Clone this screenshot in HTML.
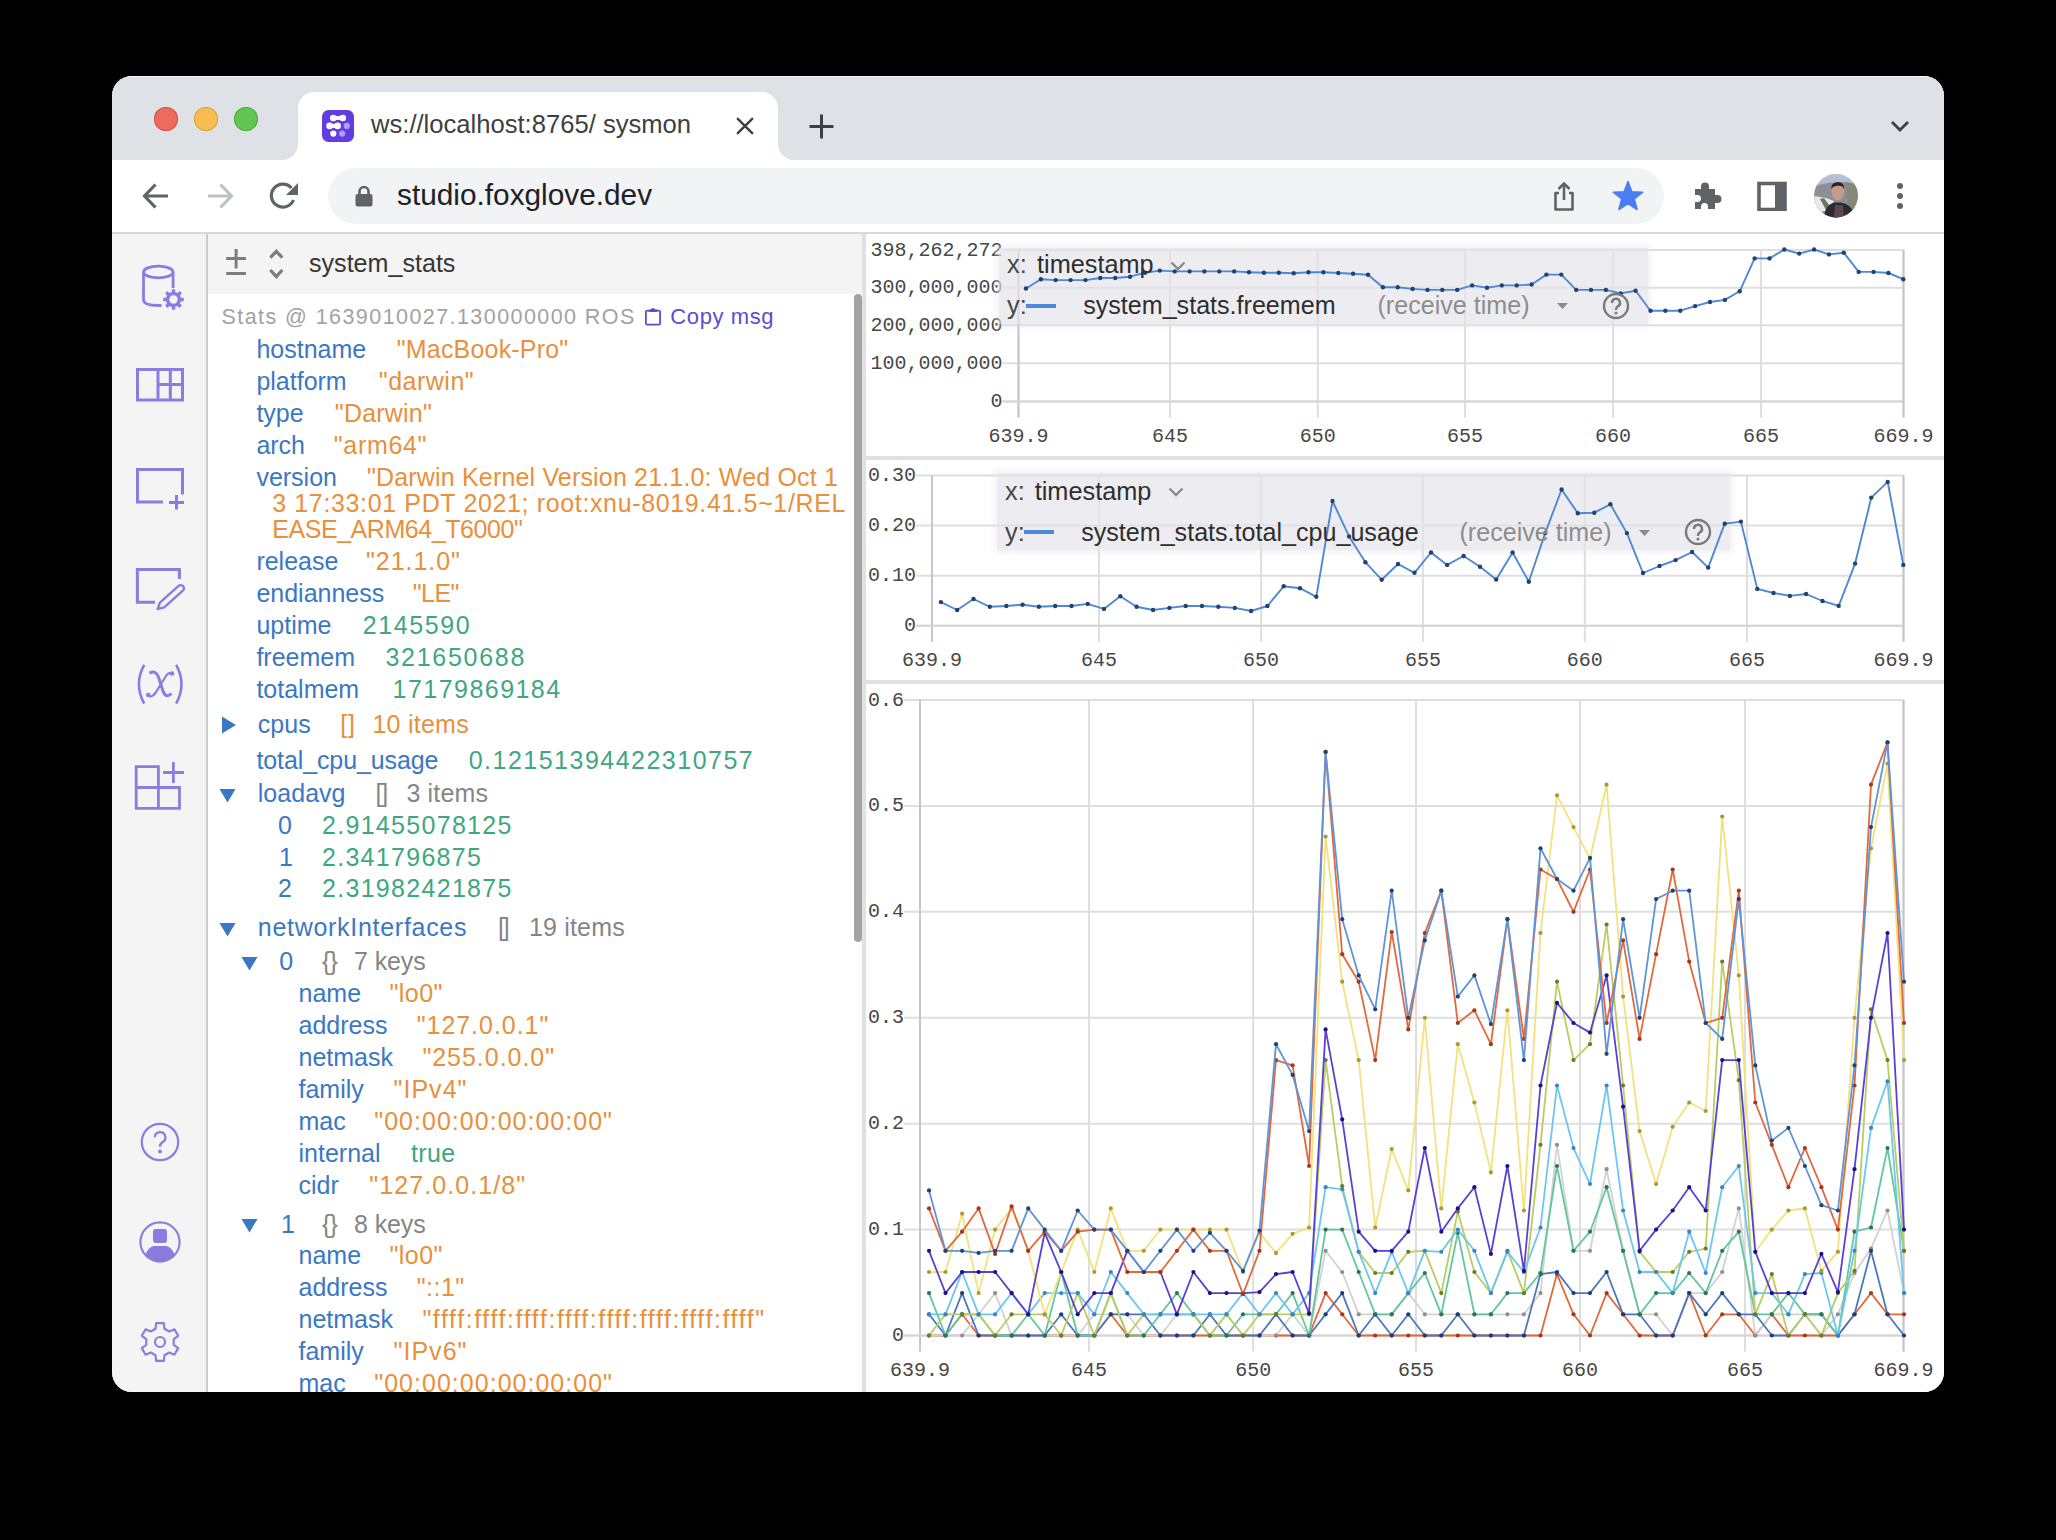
<!DOCTYPE html>
<html><head><meta charset="utf-8">
<style>
html,body{margin:0;padding:0;}
body{width:2056px;height:1540px;background:#000;position:relative;overflow:hidden;font-family:"Liberation Sans", sans-serif;}
.a{position:absolute;}
.t{position:absolute;white-space:pre;line-height:1;}
#win{position:absolute;left:112px;top:76px;width:1832px;height:1316px;border-radius:20px;overflow:hidden;background:#fff;}
</style></head><body>
<div id="win">

<div class="a" style="left:-112px;top:-76px;width:2056px;height:1540px;">
<div class="a" style="left:112px;top:76px;width:1832px;height:84px;background:#dee1e6;"></div>
<div class="a" style="left:112px;top:76px;width:1832px;height:1px;background:#f4f5f7;"></div>
<div class="a" style="left:154px;top:107px;width:24px;height:24px;border-radius:50%;background:#ee6a5f;box-shadow:inset 0 0 0 1px #ce5347;"></div>
<div class="a" style="left:194px;top:107px;width:24px;height:24px;border-radius:50%;background:#f5be4f;box-shadow:inset 0 0 0 1px #d6a243;"></div>
<div class="a" style="left:234px;top:107px;width:24px;height:24px;border-radius:50%;background:#62c554;box-shadow:inset 0 0 0 1px #58a942;"></div>
<div class="a" style="left:298px;top:92px;width:480px;height:68px;background:#fff;border-radius:16px 16px 0 0;"></div>
<div class="a" style="left:282px;top:144px;width:16px;height:16px;background:radial-gradient(circle at 0 0, #dee1e6 15.5px, #fff 16.5px);"></div>
<div class="a" style="left:778px;top:144px;width:16px;height:16px;background:radial-gradient(circle at 100% 0, #dee1e6 15.5px, #fff 16.5px);"></div>
<svg class="a" style="left:322px;top:110px" width="32" height="32" viewBox="0 0 32 32">
<rect x="0" y="0" width="32" height="32" rx="6.5" fill="#613de0"/>
<g fill="#fff">
<circle cx="11.3" cy="8" r="3.3"/><circle cx="20.8" cy="8" r="3.3"/><rect x="11.3" y="6" width="9.5" height="4"/>
<circle cx="7.6" cy="15.9" r="3.3"/><circle cx="15.6" cy="15.9" r="3.3"/><rect x="7.6" y="13.9" width="8" height="4"/>
<circle cx="11.3" cy="23.6" r="3.1"/>
</g>
<g fill="#b39cf7"><circle cx="24.8" cy="15.9" r="3.1"/><circle cx="20.2" cy="23.6" r="3.1"/></g>
</svg>
<div class="t" style="left:371px;top:112.3px;font-size:25.6px;color:#3c4043;">ws://localhost:8765/ sysmon</div>
<svg class="a" style="left:735px;top:116px" width="20" height="20" viewBox="0 0 20 20"><path d="M2.8 2.8L17.2 17.2M17.2 2.8L2.8 17.2" stroke="#3c4043" stroke-width="2.4" stroke-linecap="round"/></svg>
<svg class="a" style="left:808px;top:113px" width="27" height="27" viewBox="0 0 27 27"><path d="M13.5 1.5V25.5M1.5 13.5H25.5" stroke="#3c4043" stroke-width="3"/></svg>
<svg class="a" style="left:1889px;top:118px" width="22" height="16" viewBox="0 0 22 16"><path d="M3 4L11 12L19 4" fill="none" stroke="#3c4043" stroke-width="2.8"/></svg>
<div class="a" style="left:112px;top:160px;width:1832px;height:72px;background:#fff;"></div>
<div class="a" style="left:112px;top:232px;width:1832px;height:2px;background:#d8d8d8;"></div>
<svg class="a" style="left:140px;top:180px" width="32" height="32" viewBox="0 0 32 32"><path d="M28 16H5M15.5 4.5L4.5 16L15.5 27.5" fill="none" stroke="#5f6368" stroke-width="3.2"/></svg>
<svg class="a" style="left:204px;top:180px" width="32" height="32" viewBox="0 0 32 32"><path d="M4 16H27M16.5 4.5L27.5 16L16.5 27.5" fill="none" stroke="#bdc1c6" stroke-width="3.2"/></svg>
<svg class="a" style="left:268px;top:180px" width="32" height="32" viewBox="0 0 32 32"><path d="M25.5 20A11.5 11.5 0 1 1 23.5 8" fill="none" stroke="#5f6368" stroke-width="3.2"/><path d="M30 3V15H18Z" fill="#5f6368"/></svg>
<div class="a" style="left:328px;top:168px;width:1336px;height:56px;border-radius:28px;background:#f1f3f4;"></div>
<svg class="a" style="left:355px;top:185px" width="18" height="22" viewBox="0 0 18 22"><path d="M4.5 9V6.5A4.5 4.5 0 0 1 13.5 6.5V9" fill="none" stroke="#5f6368" stroke-width="2.6"/><rect x="0.5" y="9" width="17" height="12.5" rx="2" fill="#5f6368"/></svg>
<div class="t" style="left:397px;top:180.4px;font-size:29.8px;color:#202124;">studio.foxglove.dev</div>
<svg class="a" style="left:1550px;top:180px" width="28" height="32" viewBox="0 0 28 32"><path d="M9 13H5.5V29.5H22.5V13H19" fill="none" stroke="#5f6368" stroke-width="2.6" stroke-linejoin="round"/><path d="M14 20V3.5M8.5 9L14 3.5L19.5 9" fill="none" stroke="#5f6368" stroke-width="2.6" stroke-linejoin="round"/></svg>
<svg class="a" style="left:1610px;top:178px" width="36" height="36" viewBox="0 0 36 36"><polygon points="18.00,3.50 21.88,13.66 32.74,14.21 24.28,21.04 27.11,31.54 18.00,25.60 8.89,31.54 11.72,21.04 3.26,14.21 14.12,13.66" fill="#4a7ef2" stroke="#4a7ef2" stroke-width="1.5" stroke-linejoin="round"/></svg>
<svg class="a" style="left:1692px;top:179px" width="32" height="32" viewBox="0 0 32 32"><path d="M3 10H9V7.5A4 4 0 0 1 17 7.5V10H23V16H25.5A4 4 0 0 1 25.5 24H23V30H16V27.5A3.5 3.5 0 0 0 9 27.5V30H3V23H5.5A3.5 3.5 0 0 0 5.5 16H3Z" fill="#5f6368"/></svg>
<svg class="a" style="left:1756px;top:181px" width="32" height="30" viewBox="0 0 32 30"><rect x="3" y="2.5" width="26" height="26" fill="none" stroke="#5f6368" stroke-width="3.6"/><rect x="19" y="2" width="10" height="27" fill="#5f6368"/></svg>
<svg class="a" style="left:1814px;top:174px" width="44" height="44" viewBox="0 0 44 44">
<defs><clipPath id="av"><circle cx="22" cy="21.6" r="21.8"/></clipPath>
<linearGradient id="sky" x1="0" y1="0" x2="0" y2="1"><stop offset="0" stop-color="#b9c3d8"/><stop offset="1" stop-color="#9aa0ad"/></linearGradient></defs>
<g clip-path="url(#av)">
<rect width="44" height="44" fill="url(#sky)"/>
<path d="M0 12L14 9L30 8L44 10V44H0Z" fill="#8d8f96"/>
<path d="M31 8Q40 9 44 16V44H33Q35 26 31 8Z" fill="#848876"/>
<path d="M0 22L12 24L20 27L14 36L0 40Z" fill="#e6eaec"/>
<path d="M6 25L10 24L16 32L12 36Z" fill="#6f7660"/>
<ellipse cx="23.7" cy="18" rx="6.3" ry="8.2" fill="#c69c88"/>
<path d="M17.2 15Q17 8.5 23.5 8Q30.5 8 30.3 15Q28.5 11.5 24 11.8Q19.5 11.8 17.2 15Z" fill="#2e2429"/>
<path d="M10 44Q11 30 21 28.5H27Q37 30 40 40V44Z" fill="#2a2c33"/>
<path d="M20 44L21 31H29L30 44Z" fill="#5b4752"/>
</g></svg>
<div class="a" style="left:1897px;top:183px;width:6px;height:6px;border-radius:50%;background:#5f6368;"></div>
<div class="a" style="left:1897px;top:193px;width:6px;height:6px;border-radius:50%;background:#5f6368;"></div>
<div class="a" style="left:1897px;top:203px;width:6px;height:6px;border-radius:50%;background:#5f6368;"></div>
<div class="a" style="left:112px;top:234px;width:94px;height:1158px;background:#f4f4f5;"></div>
<div class="a" style="left:206px;top:234px;width:2px;height:1158px;background:#cbcbcb;"></div>
<svg class="a" style="left:130px;top:258px" width="60" height="56" viewBox="0 0 60 56">
<ellipse cx="28.3" cy="14" rx="14.8" ry="5.8" fill="none" stroke="#8a7ddf" stroke-width="2.8"/>
<path d="M13.5 14V41.5Q13.5 47.5 28.3 47.5H31.5" fill="none" stroke="#8a7ddf" stroke-width="2.8"/>
<path d="M43.1 14V30" fill="none" stroke="#8a7ddf" stroke-width="2.8"/>
<path d="M50.52,38.59L50.92,39.87L53.76,39.82L53.76,43.18L50.92,43.13L50.52,44.41L49.90,45.60L51.94,47.57L49.57,49.94L47.60,47.90L46.41,48.52L45.13,48.92L45.18,51.76L41.82,51.76L41.87,48.92L40.59,48.52L39.40,47.90L37.43,49.94L35.06,47.57L37.10,45.60L36.48,44.41L36.08,43.13L33.24,43.18L33.24,39.82L36.08,39.87L36.48,38.59L37.10,37.40L35.06,35.43L37.43,33.06L39.40,35.10L40.59,34.48L41.87,34.08L41.82,31.24L45.18,31.24L45.13,34.08L46.41,34.48L47.60,35.10L49.57,33.06L51.94,35.43L49.90,37.40Z" fill="#8a7ddf"/>
<circle cx="43.5" cy="41.5" r="4.2" fill="#f4f4f5"/>
</svg>
<svg class="a" style="left:130px;top:362px" width="60" height="44" viewBox="0 0 60 44">
<rect x="7.5" y="7.5" width="45" height="30.5" fill="none" stroke="#8a7ddf" stroke-width="3"/>
<path d="M28 7.5V38M40.3 7.5V38M28 22.5H52.5" stroke="#8a7ddf" stroke-width="3"/>
</svg>
<svg class="a" style="left:130px;top:462px" width="60" height="52" viewBox="0 0 60 52">
<path d="M33 40H7.5V7.5H52.5V32.5" fill="none" stroke="#8a7ddf" stroke-width="3"/>
<path d="M39 40.5H54M46.5 33V47.5" stroke="#8a7ddf" stroke-width="3"/>
</svg>
<svg class="a" style="left:130px;top:562px" width="60" height="52" viewBox="0 0 60 52">
<path d="M25 40.3H7.4V7.5H49.4V16.9" fill="none" stroke="#8a7ddf" stroke-width="3"/>
<path d="M27.6 47L29.93 40.61L48.56 23.92A3.2 3.2 0 0 1 52.84 28.68L34.21 45.37Z" fill="none" stroke="#8a7ddf" stroke-width="2.4" stroke-linejoin="round"/>
</svg>
<svg class="a" style="left:130px;top:660px" width="60" height="50" viewBox="130 660 60 50">
<path d="M144.2 664.8Q133.6 684 144.2 703.6" fill="none" stroke="#8a7ddf" stroke-width="2.6"/>
<path d="M176.2 664.8Q186.8 684 176.2 703.6" fill="none" stroke="#8a7ddf" stroke-width="2.6"/>
<path d="M149.5 673.2Q155.5 669.5 158.5 677L162.8 690.5Q165.5 699 171.5 693.5" fill="none" stroke="#8a7ddf" stroke-width="3"/>
<path d="M148.5 695.5Q151.5 698 155 693.5L166 676Q168.5 672 171.8 673.5" fill="none" stroke="#8a7ddf" stroke-width="2.2"/>
<circle cx="148.3" cy="695" r="2.3" fill="#8a7ddf"/><circle cx="172" cy="673.5" r="2.3" fill="#8a7ddf"/>
</svg>
<svg class="a" style="left:130px;top:755px" width="60" height="60" viewBox="0 0 60 60">
<path d="M6.2 32.5H49.5V53.4H6.2V11.7H28.4V53.4" fill="none" stroke="#8a7ddf" stroke-width="2.8"/>
<path d="M33.1 17.5H54M43.4 7V27.9" stroke="#8a7ddf" stroke-width="2.8"/>
</svg>
<svg class="a" style="left:138px;top:1120px" width="44" height="44" viewBox="0 0 44 44">
<circle cx="22" cy="22" r="18.2" fill="none" stroke="#8a7ddf" stroke-width="2.2"/>
<path d="M16.8 17.2A5.3 5.3 0 1 1 24.3 22.2Q22 23.8 22 26.8" fill="none" stroke="#8a7ddf" stroke-width="2.3"/>
<circle cx="22" cy="31.5" r="1.9" fill="#8a7ddf"/>
</svg>
<svg class="a" style="left:138px;top:1220px" width="44" height="44" viewBox="0 0 44 44">
<defs><clipPath id="uc"><circle cx="22" cy="22" r="19.5"/></clipPath></defs>
<circle cx="22" cy="22" r="19.6" fill="none" stroke="#8a7ddf" stroke-width="2.1"/>
<rect x="15" y="9" width="14" height="14" rx="3" fill="#8a7ddf"/>
<g clip-path="url(#uc)"><path d="M6 42Q8 27 16 26H28Q36 27 38 42Z" fill="#8a7ddf"/></g>
</svg>
<svg class="a" style="left:138px;top:1320px" width="44" height="44" viewBox="0 0 44 44">
<path d="M17.53,8.73L18.20,3.18L25.80,3.18L26.47,8.73L31.26,11.50L36.40,9.30L40.20,15.88L35.72,19.23L35.72,24.77L40.20,28.12L36.40,34.70L31.26,32.50L26.47,35.27L25.80,40.82L18.20,40.82L17.53,35.27L12.74,32.50L7.60,34.70L3.80,28.12L8.28,24.77L8.28,19.23L3.80,15.88L7.60,9.30L12.74,11.50Z" fill="none" stroke="#8a7ddf" stroke-width="2.2" stroke-linejoin="round"/>
<circle cx="22" cy="22" r="5" fill="none" stroke="#8a7ddf" stroke-width="2.2"/>
</svg>
<div class="a" style="left:208px;top:234px;width:654px;height:1158px;background:#fff;overflow:hidden;">
<div class="a" style="left:0;top:0;width:654px;height:60px;background:#f4f4f4;"></div>
<svg class="a" style="left:14px;top:12px" width="28" height="34" viewBox="0 0 28 34"><path d="M14.1 3.1V22.6M4.2 12.5H23.9M4.2 27.4H23.9" stroke="#7d7d7d" stroke-width="3"/></svg>
<svg class="a" style="left:56px;top:14px" width="24" height="34" viewBox="0 0 24 34"><path d="M6.3 9.6L12.3 3.4L18.3 9.6M6.3 22L12.3 28.6L18.3 22" fill="none" stroke="#7d7d7d" stroke-width="3.2"/></svg>
<div class="t" style="left:101px;top:17px;font-size:25.1px;color:#363636;">system_stats</div>
<div class="a" style="left:646px;top:60px;width:8px;height:648px;border-radius:4px;background:#a3a3a3;"></div>
<div class="t" style="left:13.5px;top:72.7px;font-size:21.5px;color:#a2a2a2;font-size:21.5px;letter-spacing:1.43px;">Stats @ 1639010027.130000000 ROS</div>
<svg class="a" style="left:436px;top:73px" width="18" height="20" viewBox="0 0 18 20"><rect x="1.9" y="3.6" width="14.2" height="14" rx="1.2" fill="none" stroke="#5a4ed3" stroke-width="1.8"/><path d="M5.5 4.5H12.5V3.2H10.5A1.5 1.5 0 0 0 7.5 3.2H5.5Z" fill="#5a4ed3" stroke="#5a4ed3" stroke-width="1.2"/></svg>
<div class="t" style="left:462.3px;top:71.7px;font-size:22.0px;color:#5a4ed3;font-size:22px;letter-spacing:0.61px;">Copy msg</div>
<div class="t" style="left:48.4px;top:103.3px;font-size:25px;color:#3b78c4;">hostname</div>
<div class="t" style="left:188.8px;top:103.3px;font-size:25px;color:#e8903c;letter-spacing:0.18px;">"MacBook-Pro"</div>
<div class="t" style="left:48.4px;top:135.3px;font-size:25px;color:#3b78c4;">platform</div>
<div class="t" style="left:170.8px;top:135.3px;font-size:25px;color:#e8903c;letter-spacing:0.50px;">"darwin"</div>
<div class="t" style="left:48.4px;top:167.3px;font-size:25px;color:#3b78c4;">type</div>
<div class="t" style="left:126.8px;top:167.3px;font-size:25px;color:#e8903c;letter-spacing:0.21px;">"Darwin"</div>
<div class="t" style="left:48.4px;top:199.3px;font-size:25px;color:#3b78c4;">arch</div>
<div class="t" style="left:125.8px;top:199.3px;font-size:25px;color:#e8903c;letter-spacing:0.67px;">"arm64"</div>
<div class="t" style="left:48.4px;top:231.3px;font-size:25px;color:#3b78c4;">version</div>
<div class="t" style="left:159.0px;top:231.3px;font-size:25px;color:#e8903c;letter-spacing:0.17px;">"Darwin Kernel Version 21.1.0: Wed Oct 1</div>
<div class="t" style="left:64.2px;top:257.3px;font-size:25px;color:#e8903c;letter-spacing:0.64px;">3 17:33:01 PDT 2021; root:xnu-8019.41.5~1/REL</div>
<div class="t" style="left:64.2px;top:283.3px;font-size:25px;color:#e8903c;letter-spacing:-0.44px;">EASE_ARM64_T6000"</div>
<div class="t" style="left:48.4px;top:315.4px;font-size:25px;color:#3b78c4;">release</div>
<div class="t" style="left:158.0px;top:315.4px;font-size:25px;color:#e8903c;letter-spacing:0.96px;">"21.1.0"</div>
<div class="t" style="left:48.4px;top:347.4px;font-size:25px;color:#3b78c4;">endianness</div>
<div class="t" style="left:204.8px;top:347.4px;font-size:25px;color:#e8903c;letter-spacing:-0.55px;">"LE"</div>
<div class="t" style="left:48.4px;top:379.4px;font-size:25px;color:#3b78c4;">uptime</div>
<div class="t" style="left:154.7px;top:379.4px;font-size:25px;color:#3fa77f;letter-spacing:1.61px;">2145590</div>
<div class="t" style="left:48.4px;top:411.4px;font-size:25px;color:#3b78c4;">freemem</div>
<div class="t" style="left:177.5px;top:411.4px;font-size:25px;color:#3fa77f;letter-spacing:1.71px;">321650688</div>
<div class="t" style="left:48.4px;top:443.4px;font-size:25px;color:#3b78c4;">totalmem</div>
<div class="t" style="left:184.6px;top:443.4px;font-size:25px;color:#3fa77f;letter-spacing:1.46px;">17179869184</div>
<svg class="a" style="left:13px;top:481px" width="16" height="20" viewBox="0 0 16 20"><path d="M1 1.5L15 10L1 18.5Z" fill="#3b78c4"/></svg>
<div class="t" style="left:49.8px;top:477.7px;font-size:25px;color:#3b78c4;letter-spacing:0.05px;">cpus</div>
<div class="t" style="left:132.3px;top:477.7px;font-size:25px;color:#e8903c;letter-spacing:0.70px;">[]</div>
<div class="t" style="left:164.4px;top:477.7px;font-size:25px;color:#e8903c;letter-spacing:0.26px;">10 items</div>
<div class="t" style="left:48.4px;top:513.7px;font-size:25px;color:#3b78c4;letter-spacing:-0.10px;">total_cpu_usage</div>
<div class="t" style="left:260.7px;top:513.7px;font-size:25px;color:#3fa77f;letter-spacing:1.49px;">0.12151394422310757</div>
<svg class="a" style="left:10.5px;top:554.4px" width="17" height="15" viewBox="0 0 17 15"><path d="M0.5 1H16.5L8.5 14.5Z" fill="#3b78c4"/></svg>
<div class="t" style="left:49.8px;top:547.3px;font-size:25px;color:#3b78c4;letter-spacing:0.02px;">loadavg</div>
<div class="t" style="left:167.6px;top:547.3px;font-size:25px;color:#858585;letter-spacing:-1.20px;">[]</div>
<div class="t" style="left:198.4px;top:547.3px;font-size:25px;color:#858585;letter-spacing:0.17px;">3 items</div>
<div class="t" style="left:70.0px;top:578.5px;font-size:25px;color:#3b78c4;">0</div>
<div class="t" style="left:114.0px;top:578.5px;font-size:25px;color:#3fa77f;letter-spacing:1.30px;">2.91455078125</div>
<div class="t" style="left:71.0px;top:610.6px;font-size:25px;color:#3b78c4;">1</div>
<div class="t" style="left:114.0px;top:610.6px;font-size:25px;color:#3fa77f;letter-spacing:1.29px;">2.341796875</div>
<div class="t" style="left:70.0px;top:642.0px;font-size:25px;color:#3b78c4;">2</div>
<div class="t" style="left:114.0px;top:642.0px;font-size:25px;color:#3fa77f;letter-spacing:1.30px;">2.31982421875</div>
<svg class="a" style="left:10.5px;top:688.4px" width="17" height="15" viewBox="0 0 17 15"><path d="M0.5 1H16.5L8.5 14.5Z" fill="#3b78c4"/></svg>
<div class="t" style="left:49.8px;top:681.2px;font-size:25px;color:#3b78c4;letter-spacing:0.71px;">networkInterfaces</div>
<div class="t" style="left:289.9px;top:681.2px;font-size:25px;color:#858585;letter-spacing:-2.10px;">[]</div>
<div class="t" style="left:321.0px;top:681.2px;font-size:25px;color:#858585;letter-spacing:0.17px;">19 items</div>
<svg class="a" style="left:32.5px;top:722.4px" width="17" height="15" viewBox="0 0 17 15"><path d="M0.5 1H16.5L8.5 14.5Z" fill="#3b78c4"/></svg>
<div class="t" style="left:71.3px;top:715.2px;font-size:25px;color:#3b78c4;">0</div>
<div class="t" style="left:114.0px;top:715.2px;font-size:25px;color:#858585;letter-spacing:-0.75px;">{}</div>
<div class="t" style="left:146.0px;top:715.2px;font-size:25px;color:#858585;letter-spacing:-0.11px;">7 keys</div>
<div class="t" style="left:90.5px;top:747.3px;font-size:25px;color:#3b78c4;">name</div>
<div class="t" style="left:181.4px;top:747.3px;font-size:25px;color:#e8903c;letter-spacing:0.48px;">"lo0"</div>
<div class="t" style="left:90.5px;top:779.3px;font-size:25px;color:#3b78c4;">address</div>
<div class="t" style="left:208.7px;top:779.3px;font-size:25px;color:#e8903c;letter-spacing:0.96px;">"127.0.0.1"</div>
<div class="t" style="left:90.5px;top:811.3px;font-size:25px;color:#3b78c4;">netmask</div>
<div class="t" style="left:214.4px;top:811.3px;font-size:25px;color:#e8903c;letter-spacing:0.97px;">"255.0.0.0"</div>
<div class="t" style="left:90.5px;top:843.3px;font-size:25px;color:#3b78c4;">family</div>
<div class="t" style="left:185.6px;top:843.3px;font-size:25px;color:#e8903c;letter-spacing:1.01px;">"IPv4"</div>
<div class="t" style="left:90.5px;top:875.3px;font-size:25px;color:#3b78c4;">mac</div>
<div class="t" style="left:166.3px;top:875.3px;font-size:25px;color:#e8903c;letter-spacing:1.02px;">"00:00:00:00:00:00"</div>
<div class="t" style="left:90.5px;top:907.3px;font-size:25px;color:#3b78c4;">internal</div>
<div class="t" style="left:202.9px;top:907.3px;font-size:25px;color:#3fa77f;letter-spacing:0.43px;">true</div>
<div class="t" style="left:90.5px;top:939.3px;font-size:25px;color:#3b78c4;">cidr</div>
<div class="t" style="left:161.2px;top:939.3px;font-size:25px;color:#e8903c;letter-spacing:1.10px;">"127.0.0.1/8"</div>
<svg class="a" style="left:32.5px;top:984.4px" width="17" height="15" viewBox="0 0 17 15"><path d="M0.5 1H16.5L8.5 14.5Z" fill="#3b78c4"/></svg>
<div class="t" style="left:73.0px;top:977.8px;font-size:25px;color:#3b78c4;">1</div>
<div class="t" style="left:114.0px;top:977.8px;font-size:25px;color:#858585;letter-spacing:-0.75px;">{}</div>
<div class="t" style="left:146.0px;top:977.8px;font-size:25px;color:#858585;letter-spacing:-0.11px;">8 keys</div>
<div class="t" style="left:90.5px;top:1009.3px;font-size:25px;color:#3b78c4;">name</div>
<div class="t" style="left:181.4px;top:1009.3px;font-size:25px;color:#e8903c;letter-spacing:0.48px;">"lo0"</div>
<div class="t" style="left:90.5px;top:1041.3px;font-size:25px;color:#3b78c4;">address</div>
<div class="t" style="left:208.7px;top:1041.3px;font-size:25px;color:#e8903c;letter-spacing:0.50px;">"::1"</div>
<div class="t" style="left:90.5px;top:1073.3px;font-size:25px;color:#3b78c4;">netmask</div>
<div class="t" style="left:214.4px;top:1073.3px;font-size:25px;color:#e8903c;letter-spacing:1.60px;">"ffff:ffff:ffff:ffff:ffff:ffff:ffff:ffff"</div>
<div class="t" style="left:90.5px;top:1105.3px;font-size:25px;color:#3b78c4;">family</div>
<div class="t" style="left:185.6px;top:1105.3px;font-size:25px;color:#e8903c;letter-spacing:1.01px;">"IPv6"</div>
<div class="t" style="left:90.5px;top:1137.3px;font-size:25px;color:#3b78c4;">mac</div>
<div class="t" style="left:166.3px;top:1137.3px;font-size:25px;color:#e8903c;letter-spacing:1.02px;">"00:00:00:00:00:00"</div>
</div>
<div class="a" style="left:862px;top:234px;width:4px;height:1158px;background:#e1e1e1;"></div>
<div class="a" style="left:866px;top:234px;width:1078px;height:1158px;background:#fff;"></div>
<div class="a" style="left:866px;top:456px;width:1078px;height:4px;background:#e1e1e1;"></div>
<div class="a" style="left:866px;top:680px;width:1078px;height:4px;background:#e1e1e1;"></div>
<svg class="a" style="left:866px;top:234px" width="1078" height="222" viewBox="866 234 1078 222"><line x1="1002.5" y1="250" x2="1903.5" y2="250" stroke="#dedede" stroke-width="2"/><line x1="1002.5" y1="287.7" x2="1903.5" y2="287.7" stroke="#dedede" stroke-width="2"/><line x1="1002.5" y1="325.2" x2="1903.5" y2="325.2" stroke="#dedede" stroke-width="2"/><line x1="1002.5" y1="363.3" x2="1903.5" y2="363.3" stroke="#dedede" stroke-width="2"/><line x1="1002.5" y1="401.5" x2="1903.5" y2="401.5" stroke="#dedede" stroke-width="2"/><line x1="1018.5" y1="250" x2="1018.5" y2="417.5" stroke="#dedede" stroke-width="2"/><line x1="1170" y1="250" x2="1170" y2="417.5" stroke="#dedede" stroke-width="2"/><line x1="1317.8" y1="250" x2="1317.8" y2="417.5" stroke="#dedede" stroke-width="2"/><line x1="1465" y1="250" x2="1465" y2="417.5" stroke="#dedede" stroke-width="2"/><line x1="1613.1" y1="250" x2="1613.1" y2="417.5" stroke="#dedede" stroke-width="2"/><line x1="1761" y1="250" x2="1761" y2="417.5" stroke="#dedede" stroke-width="2"/><line x1="1903.5" y1="250" x2="1903.5" y2="417.5" stroke="#dedede" stroke-width="2"/><line x1="1018.5" y1="250" x2="1018.5" y2="417.5" stroke="#c6c6c6" stroke-width="2"/><line x1="1002.5" y1="401.5" x2="1904.5" y2="401.5" stroke="#d6d6d6" stroke-width="2"/><line x1="1903.5" y1="250" x2="1903.5" y2="417.5" stroke="#c6c6c6" stroke-width="2"/><text x="1002.5" y="255.5" text-anchor="end" font-family="Liberation Mono, monospace" font-size="20" fill="#474747">398,262,272</text><text x="1002.5" y="293.2" text-anchor="end" font-family="Liberation Mono, monospace" font-size="20" fill="#474747">300,000,000</text><text x="1002.5" y="330.7" text-anchor="end" font-family="Liberation Mono, monospace" font-size="20" fill="#474747">200,000,000</text><text x="1002.5" y="368.8" text-anchor="end" font-family="Liberation Mono, monospace" font-size="20" fill="#474747">100,000,000</text><text x="1002.5" y="407.0" text-anchor="end" font-family="Liberation Mono, monospace" font-size="20" fill="#474747">0</text><text x="1018.5" y="442" text-anchor="middle" font-family="Liberation Mono, monospace" font-size="20" fill="#474747">639.9</text><text x="1170" y="442" text-anchor="middle" font-family="Liberation Mono, monospace" font-size="20" fill="#474747">645</text><text x="1317.8" y="442" text-anchor="middle" font-family="Liberation Mono, monospace" font-size="20" fill="#474747">650</text><text x="1465" y="442" text-anchor="middle" font-family="Liberation Mono, monospace" font-size="20" fill="#474747">655</text><text x="1613.1" y="442" text-anchor="middle" font-family="Liberation Mono, monospace" font-size="20" fill="#474747">660</text><text x="1761" y="442" text-anchor="middle" font-family="Liberation Mono, monospace" font-size="20" fill="#474747">665</text><text x="1903.5" y="442" text-anchor="middle" font-family="Liberation Mono, monospace" font-size="20" fill="#474747">669.9</text></svg>
<svg class="a" style="left:866px;top:460px" width="1078" height="220" viewBox="866 460 1078 220"><line x1="916" y1="475.5" x2="1903.5" y2="475.5" stroke="#dedede" stroke-width="2"/><line x1="916" y1="525.4" x2="1903.5" y2="525.4" stroke="#dedede" stroke-width="2"/><line x1="916" y1="575.8" x2="1903.5" y2="575.8" stroke="#dedede" stroke-width="2"/><line x1="916" y1="625.7" x2="1903.5" y2="625.7" stroke="#dedede" stroke-width="2"/><line x1="932" y1="475.5" x2="932" y2="641.7" stroke="#dedede" stroke-width="2"/><line x1="1099" y1="475.5" x2="1099" y2="641.7" stroke="#dedede" stroke-width="2"/><line x1="1261.1" y1="475.5" x2="1261.1" y2="641.7" stroke="#dedede" stroke-width="2"/><line x1="1422.9" y1="475.5" x2="1422.9" y2="641.7" stroke="#dedede" stroke-width="2"/><line x1="1584.8" y1="475.5" x2="1584.8" y2="641.7" stroke="#dedede" stroke-width="2"/><line x1="1747" y1="475.5" x2="1747" y2="641.7" stroke="#dedede" stroke-width="2"/><line x1="1903.5" y1="475.5" x2="1903.5" y2="641.7" stroke="#dedede" stroke-width="2"/><line x1="932" y1="475.5" x2="932" y2="641.7" stroke="#c6c6c6" stroke-width="2"/><line x1="916" y1="625.7" x2="1904.5" y2="625.7" stroke="#d6d6d6" stroke-width="2"/><line x1="1903.5" y1="475.5" x2="1903.5" y2="641.7" stroke="#c6c6c6" stroke-width="2"/><text x="916" y="481.0" text-anchor="end" font-family="Liberation Mono, monospace" font-size="20" fill="#474747">0.30</text><text x="916" y="530.9" text-anchor="end" font-family="Liberation Mono, monospace" font-size="20" fill="#474747">0.20</text><text x="916" y="581.3" text-anchor="end" font-family="Liberation Mono, monospace" font-size="20" fill="#474747">0.10</text><text x="916" y="631.2" text-anchor="end" font-family="Liberation Mono, monospace" font-size="20" fill="#474747">0</text><text x="932" y="666" text-anchor="middle" font-family="Liberation Mono, monospace" font-size="20" fill="#474747">639.9</text><text x="1099" y="666" text-anchor="middle" font-family="Liberation Mono, monospace" font-size="20" fill="#474747">645</text><text x="1261.1" y="666" text-anchor="middle" font-family="Liberation Mono, monospace" font-size="20" fill="#474747">650</text><text x="1422.9" y="666" text-anchor="middle" font-family="Liberation Mono, monospace" font-size="20" fill="#474747">655</text><text x="1584.8" y="666" text-anchor="middle" font-family="Liberation Mono, monospace" font-size="20" fill="#474747">660</text><text x="1747" y="666" text-anchor="middle" font-family="Liberation Mono, monospace" font-size="20" fill="#474747">665</text><text x="1903.5" y="666" text-anchor="middle" font-family="Liberation Mono, monospace" font-size="20" fill="#474747">669.9</text></svg>
<svg class="a" style="left:866px;top:684px" width="1078" height="708" viewBox="866 684 1078 708"><line x1="904" y1="700.0" x2="1903.5" y2="700.0" stroke="#dedede" stroke-width="2"/><line x1="904" y1="805.9" x2="1903.5" y2="805.9" stroke="#dedede" stroke-width="2"/><line x1="904" y1="911.8" x2="1903.5" y2="911.8" stroke="#dedede" stroke-width="2"/><line x1="904" y1="1017.8" x2="1903.5" y2="1017.8" stroke="#dedede" stroke-width="2"/><line x1="904" y1="1123.7" x2="1903.5" y2="1123.7" stroke="#dedede" stroke-width="2"/><line x1="904" y1="1229.6" x2="1903.5" y2="1229.6" stroke="#dedede" stroke-width="2"/><line x1="904" y1="1335.5" x2="1903.5" y2="1335.5" stroke="#dedede" stroke-width="2"/><line x1="920" y1="700" x2="920" y2="1351.5" stroke="#dedede" stroke-width="2"/><line x1="1089" y1="700" x2="1089" y2="1351.5" stroke="#dedede" stroke-width="2"/><line x1="1253.2" y1="700" x2="1253.2" y2="1351.5" stroke="#dedede" stroke-width="2"/><line x1="1416" y1="700" x2="1416" y2="1351.5" stroke="#dedede" stroke-width="2"/><line x1="1580" y1="700" x2="1580" y2="1351.5" stroke="#dedede" stroke-width="2"/><line x1="1745" y1="700" x2="1745" y2="1351.5" stroke="#dedede" stroke-width="2"/><line x1="1903.5" y1="700" x2="1903.5" y2="1351.5" stroke="#dedede" stroke-width="2"/><line x1="920" y1="700" x2="920" y2="1351.5" stroke="#c6c6c6" stroke-width="2"/><line x1="904" y1="1335.5" x2="1904.5" y2="1335.5" stroke="#d6d6d6" stroke-width="2"/><line x1="1903.5" y1="700" x2="1903.5" y2="1351.5" stroke="#c6c6c6" stroke-width="2"/><text x="904" y="705.5" text-anchor="end" font-family="Liberation Mono, monospace" font-size="20" fill="#474747">0.6</text><text x="904" y="811.4" text-anchor="end" font-family="Liberation Mono, monospace" font-size="20" fill="#474747">0.5</text><text x="904" y="917.3" text-anchor="end" font-family="Liberation Mono, monospace" font-size="20" fill="#474747">0.4</text><text x="904" y="1023.3" text-anchor="end" font-family="Liberation Mono, monospace" font-size="20" fill="#474747">0.3</text><text x="904" y="1129.2" text-anchor="end" font-family="Liberation Mono, monospace" font-size="20" fill="#474747">0.2</text><text x="904" y="1235.1" text-anchor="end" font-family="Liberation Mono, monospace" font-size="20" fill="#474747">0.1</text><text x="904" y="1341.0" text-anchor="end" font-family="Liberation Mono, monospace" font-size="20" fill="#474747">0</text><text x="920" y="1375.5" text-anchor="middle" font-family="Liberation Mono, monospace" font-size="20" fill="#474747">639.9</text><text x="1089" y="1375.5" text-anchor="middle" font-family="Liberation Mono, monospace" font-size="20" fill="#474747">645</text><text x="1253.2" y="1375.5" text-anchor="middle" font-family="Liberation Mono, monospace" font-size="20" fill="#474747">650</text><text x="1416" y="1375.5" text-anchor="middle" font-family="Liberation Mono, monospace" font-size="20" fill="#474747">655</text><text x="1580" y="1375.5" text-anchor="middle" font-family="Liberation Mono, monospace" font-size="20" fill="#474747">660</text><text x="1745" y="1375.5" text-anchor="middle" font-family="Liberation Mono, monospace" font-size="20" fill="#474747">665</text><text x="1903.5" y="1375.5" text-anchor="middle" font-family="Liberation Mono, monospace" font-size="20" fill="#474747">669.9</text></svg>
<div class="a" style="left:999px;top:248px;width:649px;height:76px;background:rgba(228,228,234,0.66);box-shadow:0 0 6px 3px rgba(228,228,234,0.45);"></div>
<svg class="a" style="left:866px;top:234px" width="1078" height="222" viewBox="866 234 1078 222"><clipPath id="c234"><rect x="1018.5" y="244" width="889.0" height="163.5"/></clipPath><g clip-path="url(#c234)"><polyline points="1026.0,288.5 1040.9,279.3 1055.7,280.1 1070.6,280.1 1085.5,280.1 1100.3,278.0 1115.2,278.0 1130.1,276.7 1145.0,272.7 1159.8,270.6 1174.7,271.4 1189.6,271.4 1204.4,271.4 1219.3,271.4 1234.2,271.4 1249.0,272.2 1263.9,272.7 1278.8,272.7 1293.7,273.2 1308.5,272.2 1323.4,272.2 1338.3,273.0 1353.1,273.8 1368.0,274.8 1382.9,287.2 1397.7,287.2 1412.6,288.9 1427.5,289.9 1442.3,289.9 1457.2,289.9 1472.1,285.4 1487.0,287.8 1501.8,285.4 1516.7,285.4 1531.6,284.5 1546.4,274.6 1561.3,274.6 1576.2,289.9 1591.0,289.9 1605.9,289.9 1620.8,293.4 1635.6,290.7 1650.5,310.7 1665.4,310.7 1680.3,310.7 1695.1,306.1 1710.0,302.0 1724.9,299.9 1739.7,291.3 1754.6,258.4 1769.5,258.4 1784.3,249.5 1799.2,253.6 1814.1,249.5 1829.0,254.4 1843.8,252.7 1858.7,271.9 1873.6,271.9 1888.4,273.0 1903.3,279.2" fill="none" stroke="#4e88d6" stroke-width="1.9" stroke-linejoin="round"/><circle cx="1026.0" cy="288.5" r="2.2" fill="#23436e"/><circle cx="1040.9" cy="279.3" r="2.2" fill="#23436e"/><circle cx="1055.7" cy="280.1" r="2.2" fill="#23436e"/><circle cx="1070.6" cy="280.1" r="2.2" fill="#23436e"/><circle cx="1085.5" cy="280.1" r="2.2" fill="#23436e"/><circle cx="1100.3" cy="278.0" r="2.2" fill="#23436e"/><circle cx="1115.2" cy="278.0" r="2.2" fill="#23436e"/><circle cx="1130.1" cy="276.7" r="2.2" fill="#23436e"/><circle cx="1145.0" cy="272.7" r="2.2" fill="#23436e"/><circle cx="1159.8" cy="270.6" r="2.2" fill="#23436e"/><circle cx="1174.7" cy="271.4" r="2.2" fill="#23436e"/><circle cx="1189.6" cy="271.4" r="2.2" fill="#23436e"/><circle cx="1204.4" cy="271.4" r="2.2" fill="#23436e"/><circle cx="1219.3" cy="271.4" r="2.2" fill="#23436e"/><circle cx="1234.2" cy="271.4" r="2.2" fill="#23436e"/><circle cx="1249.0" cy="272.2" r="2.2" fill="#23436e"/><circle cx="1263.9" cy="272.7" r="2.2" fill="#23436e"/><circle cx="1278.8" cy="272.7" r="2.2" fill="#23436e"/><circle cx="1293.7" cy="273.2" r="2.2" fill="#23436e"/><circle cx="1308.5" cy="272.2" r="2.2" fill="#23436e"/><circle cx="1323.4" cy="272.2" r="2.2" fill="#23436e"/><circle cx="1338.3" cy="273.0" r="2.2" fill="#23436e"/><circle cx="1353.1" cy="273.8" r="2.2" fill="#23436e"/><circle cx="1368.0" cy="274.8" r="2.2" fill="#23436e"/><circle cx="1382.9" cy="287.2" r="2.2" fill="#23436e"/><circle cx="1397.7" cy="287.2" r="2.2" fill="#23436e"/><circle cx="1412.6" cy="288.9" r="2.2" fill="#23436e"/><circle cx="1427.5" cy="289.9" r="2.2" fill="#23436e"/><circle cx="1442.3" cy="289.9" r="2.2" fill="#23436e"/><circle cx="1457.2" cy="289.9" r="2.2" fill="#23436e"/><circle cx="1472.1" cy="285.4" r="2.2" fill="#23436e"/><circle cx="1487.0" cy="287.8" r="2.2" fill="#23436e"/><circle cx="1501.8" cy="285.4" r="2.2" fill="#23436e"/><circle cx="1516.7" cy="285.4" r="2.2" fill="#23436e"/><circle cx="1531.6" cy="284.5" r="2.2" fill="#23436e"/><circle cx="1546.4" cy="274.6" r="2.2" fill="#23436e"/><circle cx="1561.3" cy="274.6" r="2.2" fill="#23436e"/><circle cx="1576.2" cy="289.9" r="2.2" fill="#23436e"/><circle cx="1591.0" cy="289.9" r="2.2" fill="#23436e"/><circle cx="1605.9" cy="289.9" r="2.2" fill="#23436e"/><circle cx="1620.8" cy="293.4" r="2.2" fill="#23436e"/><circle cx="1635.6" cy="290.7" r="2.2" fill="#23436e"/><circle cx="1650.5" cy="310.7" r="2.2" fill="#23436e"/><circle cx="1665.4" cy="310.7" r="2.2" fill="#23436e"/><circle cx="1680.3" cy="310.7" r="2.2" fill="#23436e"/><circle cx="1695.1" cy="306.1" r="2.2" fill="#23436e"/><circle cx="1710.0" cy="302.0" r="2.2" fill="#23436e"/><circle cx="1724.9" cy="299.9" r="2.2" fill="#23436e"/><circle cx="1739.7" cy="291.3" r="2.2" fill="#23436e"/><circle cx="1754.6" cy="258.4" r="2.2" fill="#23436e"/><circle cx="1769.5" cy="258.4" r="2.2" fill="#23436e"/><circle cx="1784.3" cy="249.5" r="2.2" fill="#23436e"/><circle cx="1799.2" cy="253.6" r="2.2" fill="#23436e"/><circle cx="1814.1" cy="249.5" r="2.2" fill="#23436e"/><circle cx="1829.0" cy="254.4" r="2.2" fill="#23436e"/><circle cx="1843.8" cy="252.7" r="2.2" fill="#23436e"/><circle cx="1858.7" cy="271.9" r="2.2" fill="#23436e"/><circle cx="1873.6" cy="271.9" r="2.2" fill="#23436e"/><circle cx="1888.4" cy="273.0" r="2.2" fill="#23436e"/><circle cx="1903.3" cy="279.2" r="2.2" fill="#23436e"/></g></svg>
<div class="t" style="left:1007px;top:251.9px;font-size:25.3px;color:#474747;">x:</div>
<div class="t" style="left:1037px;top:251.9px;font-size:25.3px;color:#2e2e2e;">timestamp</div>
<svg class="a" style="left:1170px;top:261px" width="16" height="10" viewBox="0 0 16 10"><path d="M1.5 1.5L8 8L14.5 1.5" fill="none" stroke="#8a8a8a" stroke-width="2.4"/></svg>
<div class="t" style="left:1007px;top:292.5px;font-size:25.3px;color:#474747;">y:</div>
<div class="a" style="left:1026px;top:304px;width:30px;height:4px;background:#4e88d6;"></div>
<div class="t" style="left:1083.2px;top:292.5px;font-size:25.1px;color:#2e2e2e;">system_stats.freemem</div>
<div class="t" style="left:1377.5px;top:292.5px;font-size:25.1px;color:#8d8d8d;">(receive time)</div>
<svg class="a" style="left:1557px;top:303px" width="11" height="6" viewBox="0 0 11 6"><path d="M0 0H11L5.5 6Z" fill="#8a8a8a"/></svg>
<svg class="a" style="left:1601.7px;top:292px" width="28" height="28" viewBox="0 0 28 28"><circle cx="14" cy="14" r="12" fill="none" stroke="#7a7a7a" stroke-width="2.4"/><path d="M10 11A4 4 0 1 1 15.5 14.5Q14 15.5 14 18" fill="none" stroke="#7a7a7a" stroke-width="2.4"/><circle cx="14" cy="21" r="1.5" fill="#7a7a7a"/></svg>
<div class="a" style="left:997px;top:473px;width:733px;height:77px;background:rgba(228,228,234,0.66);box-shadow:0 0 6px 3px rgba(228,228,234,0.45);"></div>
<svg class="a" style="left:866px;top:460px" width="1078" height="220" viewBox="866 460 1078 220"><clipPath id="c460"><rect x="932" y="469.5" width="975.5" height="162.20000000000005"/></clipPath><g clip-path="url(#c460)"><polyline points="940.9,602.1 957.2,610.0 973.5,599.0 989.8,606.8 1006.3,606.0 1022.6,604.7 1038.9,606.8 1055.2,606.0 1071.5,606.0 1087.7,603.9 1104.0,608.9 1120.3,596.3 1136.6,606.8 1153.1,610.0 1169.4,607.9 1185.7,606.0 1202.0,606.0 1218.3,606.8 1234.8,607.9 1251.1,611.0 1267.4,606.0 1283.7,586.3 1300.0,588.2 1316.3,596.8 1332.5,501.0 1349.1,536.4 1365.4,562.2 1381.7,579.8 1398.0,564.0 1414.5,572.8 1431.0,552.5 1447.1,564.9 1463.6,556.0 1480.0,566.8 1496.2,579.5 1512.6,552.5 1528.8,581.7 1545.2,533.1 1561.6,489.5 1577.8,513.2 1594.3,512.7 1610.4,504.3 1626.9,533.1 1643.0,573.0 1659.5,566.0 1675.6,560.1 1692.1,552.0 1708.2,567.6 1724.7,523.7 1740.9,521.6 1757.3,588.9 1773.5,593.0 1789.9,595.9 1806.1,594.0 1822.5,601.0 1838.7,605.9 1855.1,563.6 1871.3,497.6 1887.7,481.9 1903.3,564.9" fill="none" stroke="#4e88d6" stroke-width="1.9" stroke-linejoin="round"/><circle cx="940.9" cy="602.1" r="2.2" fill="#23436e"/><circle cx="957.2" cy="610.0" r="2.2" fill="#23436e"/><circle cx="973.5" cy="599.0" r="2.2" fill="#23436e"/><circle cx="989.8" cy="606.8" r="2.2" fill="#23436e"/><circle cx="1006.3" cy="606.0" r="2.2" fill="#23436e"/><circle cx="1022.6" cy="604.7" r="2.2" fill="#23436e"/><circle cx="1038.9" cy="606.8" r="2.2" fill="#23436e"/><circle cx="1055.2" cy="606.0" r="2.2" fill="#23436e"/><circle cx="1071.5" cy="606.0" r="2.2" fill="#23436e"/><circle cx="1087.7" cy="603.9" r="2.2" fill="#23436e"/><circle cx="1104.0" cy="608.9" r="2.2" fill="#23436e"/><circle cx="1120.3" cy="596.3" r="2.2" fill="#23436e"/><circle cx="1136.6" cy="606.8" r="2.2" fill="#23436e"/><circle cx="1153.1" cy="610.0" r="2.2" fill="#23436e"/><circle cx="1169.4" cy="607.9" r="2.2" fill="#23436e"/><circle cx="1185.7" cy="606.0" r="2.2" fill="#23436e"/><circle cx="1202.0" cy="606.0" r="2.2" fill="#23436e"/><circle cx="1218.3" cy="606.8" r="2.2" fill="#23436e"/><circle cx="1234.8" cy="607.9" r="2.2" fill="#23436e"/><circle cx="1251.1" cy="611.0" r="2.2" fill="#23436e"/><circle cx="1267.4" cy="606.0" r="2.2" fill="#23436e"/><circle cx="1283.7" cy="586.3" r="2.2" fill="#23436e"/><circle cx="1300.0" cy="588.2" r="2.2" fill="#23436e"/><circle cx="1316.3" cy="596.8" r="2.2" fill="#23436e"/><circle cx="1332.5" cy="501.0" r="2.2" fill="#23436e"/><circle cx="1349.1" cy="536.4" r="2.2" fill="#23436e"/><circle cx="1365.4" cy="562.2" r="2.2" fill="#23436e"/><circle cx="1381.7" cy="579.8" r="2.2" fill="#23436e"/><circle cx="1398.0" cy="564.0" r="2.2" fill="#23436e"/><circle cx="1414.5" cy="572.8" r="2.2" fill="#23436e"/><circle cx="1431.0" cy="552.5" r="2.2" fill="#23436e"/><circle cx="1447.1" cy="564.9" r="2.2" fill="#23436e"/><circle cx="1463.6" cy="556.0" r="2.2" fill="#23436e"/><circle cx="1480.0" cy="566.8" r="2.2" fill="#23436e"/><circle cx="1496.2" cy="579.5" r="2.2" fill="#23436e"/><circle cx="1512.6" cy="552.5" r="2.2" fill="#23436e"/><circle cx="1528.8" cy="581.7" r="2.2" fill="#23436e"/><circle cx="1545.2" cy="533.1" r="2.2" fill="#23436e"/><circle cx="1561.6" cy="489.5" r="2.2" fill="#23436e"/><circle cx="1577.8" cy="513.2" r="2.2" fill="#23436e"/><circle cx="1594.3" cy="512.7" r="2.2" fill="#23436e"/><circle cx="1610.4" cy="504.3" r="2.2" fill="#23436e"/><circle cx="1626.9" cy="533.1" r="2.2" fill="#23436e"/><circle cx="1643.0" cy="573.0" r="2.2" fill="#23436e"/><circle cx="1659.5" cy="566.0" r="2.2" fill="#23436e"/><circle cx="1675.6" cy="560.1" r="2.2" fill="#23436e"/><circle cx="1692.1" cy="552.0" r="2.2" fill="#23436e"/><circle cx="1708.2" cy="567.6" r="2.2" fill="#23436e"/><circle cx="1724.7" cy="523.7" r="2.2" fill="#23436e"/><circle cx="1740.9" cy="521.6" r="2.2" fill="#23436e"/><circle cx="1757.3" cy="588.9" r="2.2" fill="#23436e"/><circle cx="1773.5" cy="593.0" r="2.2" fill="#23436e"/><circle cx="1789.9" cy="595.9" r="2.2" fill="#23436e"/><circle cx="1806.1" cy="594.0" r="2.2" fill="#23436e"/><circle cx="1822.5" cy="601.0" r="2.2" fill="#23436e"/><circle cx="1838.7" cy="605.9" r="2.2" fill="#23436e"/><circle cx="1855.1" cy="563.6" r="2.2" fill="#23436e"/><circle cx="1871.3" cy="497.6" r="2.2" fill="#23436e"/><circle cx="1887.7" cy="481.9" r="2.2" fill="#23436e"/><circle cx="1903.3" cy="564.9" r="2.2" fill="#23436e"/></g></svg>
<div class="t" style="left:1005px;top:478.8px;font-size:25.3px;color:#474747;">x:</div>
<div class="t" style="left:1034.7px;top:478.8px;font-size:25.3px;color:#2e2e2e;">timestamp</div>
<svg class="a" style="left:1168px;top:487px" width="16" height="10" viewBox="0 0 16 10"><path d="M1.5 1.5L8 8L14.5 1.5" fill="none" stroke="#8a8a8a" stroke-width="2.4"/></svg>
<div class="t" style="left:1005px;top:520.4000000000001px;font-size:25.3px;color:#474747;">y:</div>
<div class="a" style="left:1024px;top:530px;width:30.40000000000009px;height:4px;background:#4e88d6;"></div>
<div class="t" style="left:1081.2px;top:520.4000000000001px;font-size:25.1px;color:#2e2e2e;">system_stats.total_cpu_usage</div>
<div class="t" style="left:1459.5px;top:520.4000000000001px;font-size:25.1px;color:#8d8d8d;">(receive time)</div>
<svg class="a" style="left:1639px;top:530px" width="11" height="6" viewBox="0 0 11 6"><path d="M0 0H11L5.5 6Z" fill="#8a8a8a"/></svg>
<svg class="a" style="left:1684px;top:518px" width="28" height="28" viewBox="0 0 28 28"><circle cx="14" cy="14" r="12" fill="none" stroke="#7a7a7a" stroke-width="2.4"/><path d="M10 11A4 4 0 1 1 15.5 14.5Q14 15.5 14 18" fill="none" stroke="#7a7a7a" stroke-width="2.4"/><circle cx="14" cy="21" r="1.5" fill="#7a7a7a"/></svg>
<svg class="a" style="left:866px;top:684px" width="1078" height="708" viewBox="866 684 1078 708"><clipPath id="c684"><rect x="920" y="694" width="987.5" height="647.5"/></clipPath><g clip-path="url(#c684)"><polyline points="929.0,1335.5 945.5,1335.5 962.1,1314.3 978.6,1335.5 995.1,1335.5 1011.6,1335.5 1028.2,1335.5 1044.7,1335.5 1061.2,1335.5 1077.7,1335.5 1094.3,1335.5 1110.8,1314.3 1127.3,1335.5 1143.8,1335.5 1160.4,1335.5 1176.9,1335.5 1193.4,1335.5 1209.9,1335.5 1226.5,1335.5 1243.0,1335.5 1259.5,1335.5 1276.0,1335.5 1292.6,1335.5 1309.1,1335.5 1325.6,1293.1 1342.2,1314.3 1358.7,1335.5 1375.2,1335.5 1391.7,1335.5 1408.3,1335.5 1424.8,1335.5 1441.3,1335.5 1457.8,1335.5 1474.4,1335.5 1490.9,1335.5 1507.4,1335.5 1523.9,1335.5 1540.5,1335.5 1557.0,1274.1 1573.5,1314.3 1590.0,1335.5 1606.6,1293.1 1623.1,1314.3 1639.6,1335.5 1656.1,1335.5 1672.7,1335.5 1689.2,1293.1 1705.7,1335.5 1722.2,1314.3 1738.8,1314.3 1755.3,1335.5 1771.8,1314.3 1788.4,1335.5 1804.9,1335.5 1821.4,1335.5 1837.9,1335.5 1854.5,1314.3 1871.0,1293.1 1887.5,1314.3 1904.0,1314.3" fill="none" stroke="#e3693d" stroke-width="1.8" stroke-linejoin="round"/><circle cx="929.0" cy="1335.5" r="2.1" fill="#9e3b1c"/><circle cx="945.5" cy="1335.5" r="2.1" fill="#9e3b1c"/><circle cx="962.1" cy="1314.3" r="2.1" fill="#9e3b1c"/><circle cx="978.6" cy="1335.5" r="2.1" fill="#9e3b1c"/><circle cx="995.1" cy="1335.5" r="2.1" fill="#9e3b1c"/><circle cx="1011.6" cy="1335.5" r="2.1" fill="#9e3b1c"/><circle cx="1028.2" cy="1335.5" r="2.1" fill="#9e3b1c"/><circle cx="1044.7" cy="1335.5" r="2.1" fill="#9e3b1c"/><circle cx="1061.2" cy="1335.5" r="2.1" fill="#9e3b1c"/><circle cx="1077.7" cy="1335.5" r="2.1" fill="#9e3b1c"/><circle cx="1094.3" cy="1335.5" r="2.1" fill="#9e3b1c"/><circle cx="1110.8" cy="1314.3" r="2.1" fill="#9e3b1c"/><circle cx="1127.3" cy="1335.5" r="2.1" fill="#9e3b1c"/><circle cx="1143.8" cy="1335.5" r="2.1" fill="#9e3b1c"/><circle cx="1160.4" cy="1335.5" r="2.1" fill="#9e3b1c"/><circle cx="1176.9" cy="1335.5" r="2.1" fill="#9e3b1c"/><circle cx="1193.4" cy="1335.5" r="2.1" fill="#9e3b1c"/><circle cx="1209.9" cy="1335.5" r="2.1" fill="#9e3b1c"/><circle cx="1226.5" cy="1335.5" r="2.1" fill="#9e3b1c"/><circle cx="1243.0" cy="1335.5" r="2.1" fill="#9e3b1c"/><circle cx="1259.5" cy="1335.5" r="2.1" fill="#9e3b1c"/><circle cx="1276.0" cy="1335.5" r="2.1" fill="#9e3b1c"/><circle cx="1292.6" cy="1335.5" r="2.1" fill="#9e3b1c"/><circle cx="1309.1" cy="1335.5" r="2.1" fill="#9e3b1c"/><circle cx="1325.6" cy="1293.1" r="2.1" fill="#9e3b1c"/><circle cx="1342.2" cy="1314.3" r="2.1" fill="#9e3b1c"/><circle cx="1358.7" cy="1335.5" r="2.1" fill="#9e3b1c"/><circle cx="1375.2" cy="1335.5" r="2.1" fill="#9e3b1c"/><circle cx="1391.7" cy="1335.5" r="2.1" fill="#9e3b1c"/><circle cx="1408.3" cy="1335.5" r="2.1" fill="#9e3b1c"/><circle cx="1424.8" cy="1335.5" r="2.1" fill="#9e3b1c"/><circle cx="1441.3" cy="1335.5" r="2.1" fill="#9e3b1c"/><circle cx="1457.8" cy="1335.5" r="2.1" fill="#9e3b1c"/><circle cx="1474.4" cy="1335.5" r="2.1" fill="#9e3b1c"/><circle cx="1490.9" cy="1335.5" r="2.1" fill="#9e3b1c"/><circle cx="1507.4" cy="1335.5" r="2.1" fill="#9e3b1c"/><circle cx="1523.9" cy="1335.5" r="2.1" fill="#9e3b1c"/><circle cx="1540.5" cy="1335.5" r="2.1" fill="#9e3b1c"/><circle cx="1557.0" cy="1274.1" r="2.1" fill="#9e3b1c"/><circle cx="1573.5" cy="1314.3" r="2.1" fill="#9e3b1c"/><circle cx="1590.0" cy="1335.5" r="2.1" fill="#9e3b1c"/><circle cx="1606.6" cy="1293.1" r="2.1" fill="#9e3b1c"/><circle cx="1623.1" cy="1314.3" r="2.1" fill="#9e3b1c"/><circle cx="1639.6" cy="1335.5" r="2.1" fill="#9e3b1c"/><circle cx="1656.1" cy="1335.5" r="2.1" fill="#9e3b1c"/><circle cx="1672.7" cy="1335.5" r="2.1" fill="#9e3b1c"/><circle cx="1689.2" cy="1293.1" r="2.1" fill="#9e3b1c"/><circle cx="1705.7" cy="1335.5" r="2.1" fill="#9e3b1c"/><circle cx="1722.2" cy="1314.3" r="2.1" fill="#9e3b1c"/><circle cx="1738.8" cy="1314.3" r="2.1" fill="#9e3b1c"/><circle cx="1755.3" cy="1335.5" r="2.1" fill="#9e3b1c"/><circle cx="1771.8" cy="1314.3" r="2.1" fill="#9e3b1c"/><circle cx="1788.4" cy="1335.5" r="2.1" fill="#9e3b1c"/><circle cx="1804.9" cy="1335.5" r="2.1" fill="#9e3b1c"/><circle cx="1821.4" cy="1335.5" r="2.1" fill="#9e3b1c"/><circle cx="1837.9" cy="1335.5" r="2.1" fill="#9e3b1c"/><circle cx="1854.5" cy="1314.3" r="2.1" fill="#9e3b1c"/><circle cx="1871.0" cy="1293.1" r="2.1" fill="#9e3b1c"/><circle cx="1887.5" cy="1314.3" r="2.1" fill="#9e3b1c"/><circle cx="1904.0" cy="1314.3" r="2.1" fill="#9e3b1c"/><polyline points="929.0,1335.5 945.5,1335.5 962.1,1335.5 978.6,1314.3 995.1,1293.1 1011.6,1335.5 1028.2,1335.5 1044.7,1335.5 1061.2,1335.5 1077.7,1335.5 1094.3,1314.3 1110.8,1314.3 1127.3,1314.3 1143.8,1335.5 1160.4,1335.5 1176.9,1314.3 1193.4,1314.3 1209.9,1335.5 1226.5,1314.3 1243.0,1335.5 1259.5,1335.5 1276.0,1335.5 1292.6,1314.3 1309.1,1335.5 1325.6,1250.8 1342.2,1272.0 1358.7,1314.3 1375.2,1314.3 1391.7,1314.3 1408.3,1293.1 1424.8,1314.3 1441.3,1314.3 1457.8,1314.3 1474.4,1314.3 1490.9,1314.3 1507.4,1314.3 1523.9,1314.3 1540.5,1293.1 1557.0,1144.8 1573.5,1250.8 1590.0,1250.8 1606.6,1169.2 1623.1,1250.8 1639.6,1314.3 1656.1,1314.3 1672.7,1335.5 1689.2,1293.1 1705.7,1293.1 1722.2,1272.0 1738.8,1208.4 1755.3,1335.5 1771.8,1314.3 1788.4,1314.3 1804.9,1314.3 1821.4,1335.5 1837.9,1314.3 1854.5,1273.0 1871.0,1248.6 1887.5,1210.5 1904.0,1293.1" fill="none" stroke="#d2d2d2" stroke-width="1.8" stroke-linejoin="round"/><circle cx="929.0" cy="1335.5" r="2.1" fill="#8f8f8f"/><circle cx="945.5" cy="1335.5" r="2.1" fill="#8f8f8f"/><circle cx="962.1" cy="1335.5" r="2.1" fill="#8f8f8f"/><circle cx="978.6" cy="1314.3" r="2.1" fill="#8f8f8f"/><circle cx="995.1" cy="1293.1" r="2.1" fill="#8f8f8f"/><circle cx="1011.6" cy="1335.5" r="2.1" fill="#8f8f8f"/><circle cx="1028.2" cy="1335.5" r="2.1" fill="#8f8f8f"/><circle cx="1044.7" cy="1335.5" r="2.1" fill="#8f8f8f"/><circle cx="1061.2" cy="1335.5" r="2.1" fill="#8f8f8f"/><circle cx="1077.7" cy="1335.5" r="2.1" fill="#8f8f8f"/><circle cx="1094.3" cy="1314.3" r="2.1" fill="#8f8f8f"/><circle cx="1110.8" cy="1314.3" r="2.1" fill="#8f8f8f"/><circle cx="1127.3" cy="1314.3" r="2.1" fill="#8f8f8f"/><circle cx="1143.8" cy="1335.5" r="2.1" fill="#8f8f8f"/><circle cx="1160.4" cy="1335.5" r="2.1" fill="#8f8f8f"/><circle cx="1176.9" cy="1314.3" r="2.1" fill="#8f8f8f"/><circle cx="1193.4" cy="1314.3" r="2.1" fill="#8f8f8f"/><circle cx="1209.9" cy="1335.5" r="2.1" fill="#8f8f8f"/><circle cx="1226.5" cy="1314.3" r="2.1" fill="#8f8f8f"/><circle cx="1243.0" cy="1335.5" r="2.1" fill="#8f8f8f"/><circle cx="1259.5" cy="1335.5" r="2.1" fill="#8f8f8f"/><circle cx="1276.0" cy="1335.5" r="2.1" fill="#8f8f8f"/><circle cx="1292.6" cy="1314.3" r="2.1" fill="#8f8f8f"/><circle cx="1309.1" cy="1335.5" r="2.1" fill="#8f8f8f"/><circle cx="1325.6" cy="1250.8" r="2.1" fill="#8f8f8f"/><circle cx="1342.2" cy="1272.0" r="2.1" fill="#8f8f8f"/><circle cx="1358.7" cy="1314.3" r="2.1" fill="#8f8f8f"/><circle cx="1375.2" cy="1314.3" r="2.1" fill="#8f8f8f"/><circle cx="1391.7" cy="1314.3" r="2.1" fill="#8f8f8f"/><circle cx="1408.3" cy="1293.1" r="2.1" fill="#8f8f8f"/><circle cx="1424.8" cy="1314.3" r="2.1" fill="#8f8f8f"/><circle cx="1441.3" cy="1314.3" r="2.1" fill="#8f8f8f"/><circle cx="1457.8" cy="1314.3" r="2.1" fill="#8f8f8f"/><circle cx="1474.4" cy="1314.3" r="2.1" fill="#8f8f8f"/><circle cx="1490.9" cy="1314.3" r="2.1" fill="#8f8f8f"/><circle cx="1507.4" cy="1314.3" r="2.1" fill="#8f8f8f"/><circle cx="1523.9" cy="1314.3" r="2.1" fill="#8f8f8f"/><circle cx="1540.5" cy="1293.1" r="2.1" fill="#8f8f8f"/><circle cx="1557.0" cy="1144.8" r="2.1" fill="#8f8f8f"/><circle cx="1573.5" cy="1250.8" r="2.1" fill="#8f8f8f"/><circle cx="1590.0" cy="1250.8" r="2.1" fill="#8f8f8f"/><circle cx="1606.6" cy="1169.2" r="2.1" fill="#8f8f8f"/><circle cx="1623.1" cy="1250.8" r="2.1" fill="#8f8f8f"/><circle cx="1639.6" cy="1314.3" r="2.1" fill="#8f8f8f"/><circle cx="1656.1" cy="1314.3" r="2.1" fill="#8f8f8f"/><circle cx="1672.7" cy="1335.5" r="2.1" fill="#8f8f8f"/><circle cx="1689.2" cy="1293.1" r="2.1" fill="#8f8f8f"/><circle cx="1705.7" cy="1293.1" r="2.1" fill="#8f8f8f"/><circle cx="1722.2" cy="1272.0" r="2.1" fill="#8f8f8f"/><circle cx="1738.8" cy="1208.4" r="2.1" fill="#8f8f8f"/><circle cx="1755.3" cy="1335.5" r="2.1" fill="#8f8f8f"/><circle cx="1771.8" cy="1314.3" r="2.1" fill="#8f8f8f"/><circle cx="1788.4" cy="1314.3" r="2.1" fill="#8f8f8f"/><circle cx="1804.9" cy="1314.3" r="2.1" fill="#8f8f8f"/><circle cx="1821.4" cy="1335.5" r="2.1" fill="#8f8f8f"/><circle cx="1837.9" cy="1314.3" r="2.1" fill="#8f8f8f"/><circle cx="1854.5" cy="1273.0" r="2.1" fill="#8f8f8f"/><circle cx="1871.0" cy="1248.6" r="2.1" fill="#8f8f8f"/><circle cx="1887.5" cy="1210.5" r="2.1" fill="#8f8f8f"/><circle cx="1904.0" cy="1293.1" r="2.1" fill="#8f8f8f"/><polyline points="929.0,1314.3 945.5,1335.5 962.1,1293.1 978.6,1335.5 995.1,1335.5 1011.6,1335.5 1028.2,1335.5 1044.7,1335.5 1061.2,1314.3 1077.7,1335.5 1094.3,1335.5 1110.8,1314.3 1127.3,1314.3 1143.8,1314.3 1160.4,1335.5 1176.9,1335.5 1193.4,1335.5 1209.9,1314.3 1226.5,1335.5 1243.0,1335.5 1259.5,1335.5 1276.0,1314.3 1292.6,1335.5 1309.1,1335.5 1325.6,1314.3 1342.2,1293.1 1358.7,1335.5 1375.2,1314.3 1391.7,1335.5 1408.3,1314.3 1424.8,1335.5 1441.3,1335.5 1457.8,1314.3 1474.4,1335.5 1490.9,1335.5 1507.4,1335.5 1523.9,1335.5 1540.5,1274.1 1557.0,1272.0 1573.5,1293.1 1590.0,1293.1 1606.6,1272.0 1623.1,1314.3 1639.6,1314.3 1656.1,1335.5 1672.7,1335.5 1689.2,1293.1 1705.7,1314.3 1722.2,1293.1 1738.8,1314.3 1755.3,1314.3 1771.8,1335.5 1788.4,1335.5 1804.9,1314.3 1821.4,1314.3 1837.9,1335.5 1854.5,1314.3 1871.0,1250.8 1887.5,1314.3 1904.0,1335.5" fill="none" stroke="#4a78c0" stroke-width="1.8" stroke-linejoin="round"/><circle cx="929.0" cy="1314.3" r="2.1" fill="#1f3d70"/><circle cx="945.5" cy="1335.5" r="2.1" fill="#1f3d70"/><circle cx="962.1" cy="1293.1" r="2.1" fill="#1f3d70"/><circle cx="978.6" cy="1335.5" r="2.1" fill="#1f3d70"/><circle cx="995.1" cy="1335.5" r="2.1" fill="#1f3d70"/><circle cx="1011.6" cy="1335.5" r="2.1" fill="#1f3d70"/><circle cx="1028.2" cy="1335.5" r="2.1" fill="#1f3d70"/><circle cx="1044.7" cy="1335.5" r="2.1" fill="#1f3d70"/><circle cx="1061.2" cy="1314.3" r="2.1" fill="#1f3d70"/><circle cx="1077.7" cy="1335.5" r="2.1" fill="#1f3d70"/><circle cx="1094.3" cy="1335.5" r="2.1" fill="#1f3d70"/><circle cx="1110.8" cy="1314.3" r="2.1" fill="#1f3d70"/><circle cx="1127.3" cy="1314.3" r="2.1" fill="#1f3d70"/><circle cx="1143.8" cy="1314.3" r="2.1" fill="#1f3d70"/><circle cx="1160.4" cy="1335.5" r="2.1" fill="#1f3d70"/><circle cx="1176.9" cy="1335.5" r="2.1" fill="#1f3d70"/><circle cx="1193.4" cy="1335.5" r="2.1" fill="#1f3d70"/><circle cx="1209.9" cy="1314.3" r="2.1" fill="#1f3d70"/><circle cx="1226.5" cy="1335.5" r="2.1" fill="#1f3d70"/><circle cx="1243.0" cy="1335.5" r="2.1" fill="#1f3d70"/><circle cx="1259.5" cy="1335.5" r="2.1" fill="#1f3d70"/><circle cx="1276.0" cy="1314.3" r="2.1" fill="#1f3d70"/><circle cx="1292.6" cy="1335.5" r="2.1" fill="#1f3d70"/><circle cx="1309.1" cy="1335.5" r="2.1" fill="#1f3d70"/><circle cx="1325.6" cy="1314.3" r="2.1" fill="#1f3d70"/><circle cx="1342.2" cy="1293.1" r="2.1" fill="#1f3d70"/><circle cx="1358.7" cy="1335.5" r="2.1" fill="#1f3d70"/><circle cx="1375.2" cy="1314.3" r="2.1" fill="#1f3d70"/><circle cx="1391.7" cy="1335.5" r="2.1" fill="#1f3d70"/><circle cx="1408.3" cy="1314.3" r="2.1" fill="#1f3d70"/><circle cx="1424.8" cy="1335.5" r="2.1" fill="#1f3d70"/><circle cx="1441.3" cy="1335.5" r="2.1" fill="#1f3d70"/><circle cx="1457.8" cy="1314.3" r="2.1" fill="#1f3d70"/><circle cx="1474.4" cy="1335.5" r="2.1" fill="#1f3d70"/><circle cx="1490.9" cy="1335.5" r="2.1" fill="#1f3d70"/><circle cx="1507.4" cy="1335.5" r="2.1" fill="#1f3d70"/><circle cx="1523.9" cy="1335.5" r="2.1" fill="#1f3d70"/><circle cx="1540.5" cy="1274.1" r="2.1" fill="#1f3d70"/><circle cx="1557.0" cy="1272.0" r="2.1" fill="#1f3d70"/><circle cx="1573.5" cy="1293.1" r="2.1" fill="#1f3d70"/><circle cx="1590.0" cy="1293.1" r="2.1" fill="#1f3d70"/><circle cx="1606.6" cy="1272.0" r="2.1" fill="#1f3d70"/><circle cx="1623.1" cy="1314.3" r="2.1" fill="#1f3d70"/><circle cx="1639.6" cy="1314.3" r="2.1" fill="#1f3d70"/><circle cx="1656.1" cy="1335.5" r="2.1" fill="#1f3d70"/><circle cx="1672.7" cy="1335.5" r="2.1" fill="#1f3d70"/><circle cx="1689.2" cy="1293.1" r="2.1" fill="#1f3d70"/><circle cx="1705.7" cy="1314.3" r="2.1" fill="#1f3d70"/><circle cx="1722.2" cy="1293.1" r="2.1" fill="#1f3d70"/><circle cx="1738.8" cy="1314.3" r="2.1" fill="#1f3d70"/><circle cx="1755.3" cy="1314.3" r="2.1" fill="#1f3d70"/><circle cx="1771.8" cy="1335.5" r="2.1" fill="#1f3d70"/><circle cx="1788.4" cy="1335.5" r="2.1" fill="#1f3d70"/><circle cx="1804.9" cy="1314.3" r="2.1" fill="#1f3d70"/><circle cx="1821.4" cy="1314.3" r="2.1" fill="#1f3d70"/><circle cx="1837.9" cy="1335.5" r="2.1" fill="#1f3d70"/><circle cx="1854.5" cy="1314.3" r="2.1" fill="#1f3d70"/><circle cx="1871.0" cy="1250.8" r="2.1" fill="#1f3d70"/><circle cx="1887.5" cy="1314.3" r="2.1" fill="#1f3d70"/><circle cx="1904.0" cy="1335.5" r="2.1" fill="#1f3d70"/><polyline points="929.0,1293.1 945.5,1335.5 962.1,1314.3 978.6,1314.3 995.1,1335.5 1011.6,1335.5 1028.2,1314.3 1044.7,1335.5 1061.2,1272.0 1077.7,1335.5 1094.3,1335.5 1110.8,1293.1 1127.3,1335.5 1143.8,1335.5 1160.4,1314.3 1176.9,1293.1 1193.4,1314.3 1209.9,1335.5 1226.5,1335.5 1243.0,1314.3 1259.5,1314.3 1276.0,1314.3 1292.6,1293.1 1309.1,1335.5 1325.6,1229.6 1342.2,1229.6 1358.7,1272.0 1375.2,1314.3 1391.7,1314.3 1408.3,1293.1 1424.8,1273.0 1441.3,1314.3 1457.8,1232.8 1474.4,1314.3 1490.9,1314.3 1507.4,1293.1 1523.9,1293.1 1540.5,1273.0 1557.0,1166.0 1573.5,1250.8 1590.0,1231.7 1606.6,1187.2 1623.1,1250.8 1639.6,1314.3 1656.1,1293.1 1672.7,1293.1 1689.2,1273.0 1705.7,1293.1 1722.2,1250.8 1738.8,1231.7 1755.3,1314.3 1771.8,1314.3 1788.4,1293.1 1804.9,1314.3 1821.4,1314.3 1837.9,1335.5 1854.5,1231.7 1871.0,1227.5 1887.5,1148.0 1904.0,1250.8" fill="none" stroke="#62c79c" stroke-width="1.8" stroke-linejoin="round"/><circle cx="929.0" cy="1293.1" r="2.1" fill="#2e7456"/><circle cx="945.5" cy="1335.5" r="2.1" fill="#2e7456"/><circle cx="962.1" cy="1314.3" r="2.1" fill="#2e7456"/><circle cx="978.6" cy="1314.3" r="2.1" fill="#2e7456"/><circle cx="995.1" cy="1335.5" r="2.1" fill="#2e7456"/><circle cx="1011.6" cy="1335.5" r="2.1" fill="#2e7456"/><circle cx="1028.2" cy="1314.3" r="2.1" fill="#2e7456"/><circle cx="1044.7" cy="1335.5" r="2.1" fill="#2e7456"/><circle cx="1061.2" cy="1272.0" r="2.1" fill="#2e7456"/><circle cx="1077.7" cy="1335.5" r="2.1" fill="#2e7456"/><circle cx="1094.3" cy="1335.5" r="2.1" fill="#2e7456"/><circle cx="1110.8" cy="1293.1" r="2.1" fill="#2e7456"/><circle cx="1127.3" cy="1335.5" r="2.1" fill="#2e7456"/><circle cx="1143.8" cy="1335.5" r="2.1" fill="#2e7456"/><circle cx="1160.4" cy="1314.3" r="2.1" fill="#2e7456"/><circle cx="1176.9" cy="1293.1" r="2.1" fill="#2e7456"/><circle cx="1193.4" cy="1314.3" r="2.1" fill="#2e7456"/><circle cx="1209.9" cy="1335.5" r="2.1" fill="#2e7456"/><circle cx="1226.5" cy="1335.5" r="2.1" fill="#2e7456"/><circle cx="1243.0" cy="1314.3" r="2.1" fill="#2e7456"/><circle cx="1259.5" cy="1314.3" r="2.1" fill="#2e7456"/><circle cx="1276.0" cy="1314.3" r="2.1" fill="#2e7456"/><circle cx="1292.6" cy="1293.1" r="2.1" fill="#2e7456"/><circle cx="1309.1" cy="1335.5" r="2.1" fill="#2e7456"/><circle cx="1325.6" cy="1229.6" r="2.1" fill="#2e7456"/><circle cx="1342.2" cy="1229.6" r="2.1" fill="#2e7456"/><circle cx="1358.7" cy="1272.0" r="2.1" fill="#2e7456"/><circle cx="1375.2" cy="1314.3" r="2.1" fill="#2e7456"/><circle cx="1391.7" cy="1314.3" r="2.1" fill="#2e7456"/><circle cx="1408.3" cy="1293.1" r="2.1" fill="#2e7456"/><circle cx="1424.8" cy="1273.0" r="2.1" fill="#2e7456"/><circle cx="1441.3" cy="1314.3" r="2.1" fill="#2e7456"/><circle cx="1457.8" cy="1232.8" r="2.1" fill="#2e7456"/><circle cx="1474.4" cy="1314.3" r="2.1" fill="#2e7456"/><circle cx="1490.9" cy="1314.3" r="2.1" fill="#2e7456"/><circle cx="1507.4" cy="1293.1" r="2.1" fill="#2e7456"/><circle cx="1523.9" cy="1293.1" r="2.1" fill="#2e7456"/><circle cx="1540.5" cy="1273.0" r="2.1" fill="#2e7456"/><circle cx="1557.0" cy="1166.0" r="2.1" fill="#2e7456"/><circle cx="1573.5" cy="1250.8" r="2.1" fill="#2e7456"/><circle cx="1590.0" cy="1231.7" r="2.1" fill="#2e7456"/><circle cx="1606.6" cy="1187.2" r="2.1" fill="#2e7456"/><circle cx="1623.1" cy="1250.8" r="2.1" fill="#2e7456"/><circle cx="1639.6" cy="1314.3" r="2.1" fill="#2e7456"/><circle cx="1656.1" cy="1293.1" r="2.1" fill="#2e7456"/><circle cx="1672.7" cy="1293.1" r="2.1" fill="#2e7456"/><circle cx="1689.2" cy="1273.0" r="2.1" fill="#2e7456"/><circle cx="1705.7" cy="1293.1" r="2.1" fill="#2e7456"/><circle cx="1722.2" cy="1250.8" r="2.1" fill="#2e7456"/><circle cx="1738.8" cy="1231.7" r="2.1" fill="#2e7456"/><circle cx="1755.3" cy="1314.3" r="2.1" fill="#2e7456"/><circle cx="1771.8" cy="1314.3" r="2.1" fill="#2e7456"/><circle cx="1788.4" cy="1293.1" r="2.1" fill="#2e7456"/><circle cx="1804.9" cy="1314.3" r="2.1" fill="#2e7456"/><circle cx="1821.4" cy="1314.3" r="2.1" fill="#2e7456"/><circle cx="1837.9" cy="1335.5" r="2.1" fill="#2e7456"/><circle cx="1854.5" cy="1231.7" r="2.1" fill="#2e7456"/><circle cx="1871.0" cy="1227.5" r="2.1" fill="#2e7456"/><circle cx="1887.5" cy="1148.0" r="2.1" fill="#2e7456"/><circle cx="1904.0" cy="1250.8" r="2.1" fill="#2e7456"/><polyline points="929.0,1335.5 945.5,1314.3 962.1,1314.3 978.6,1314.3 995.1,1335.5 1011.6,1314.3 1028.2,1314.3 1044.7,1314.3 1061.2,1335.5 1077.7,1293.1 1094.3,1335.5 1110.8,1293.1 1127.3,1335.5 1143.8,1314.3 1160.4,1314.3 1176.9,1314.3 1193.4,1314.3 1209.9,1335.5 1226.5,1314.3 1243.0,1335.5 1259.5,1314.3 1276.0,1314.3 1292.6,1314.3 1309.1,1314.3 1325.6,1060.1 1342.2,1186.2 1358.7,1251.8 1375.2,1273.0 1391.7,1273.0 1408.3,1251.8 1424.8,1250.8 1441.3,1293.1 1457.8,1211.6 1474.4,1272.0 1490.9,1293.1 1507.4,1250.8 1523.9,1293.1 1540.5,1144.8 1557.0,981.7 1573.5,1060.1 1590.0,1044.2 1606.6,924.5 1623.1,1085.5 1639.6,1251.8 1656.1,1272.0 1672.7,1272.0 1689.2,1251.8 1705.7,1248.6 1722.2,961.6 1738.8,1080.2 1755.3,1314.3 1771.8,1274.1 1788.4,1335.5 1804.9,1314.3 1821.4,1335.5 1837.9,1293.1 1854.5,1270.9 1871.0,1009.3 1887.5,1060.1 1904.0,1250.8" fill="none" stroke="#b9cd62" stroke-width="1.8" stroke-linejoin="round"/><circle cx="929.0" cy="1335.5" r="2.1" fill="#6b7c2c"/><circle cx="945.5" cy="1314.3" r="2.1" fill="#6b7c2c"/><circle cx="962.1" cy="1314.3" r="2.1" fill="#6b7c2c"/><circle cx="978.6" cy="1314.3" r="2.1" fill="#6b7c2c"/><circle cx="995.1" cy="1335.5" r="2.1" fill="#6b7c2c"/><circle cx="1011.6" cy="1314.3" r="2.1" fill="#6b7c2c"/><circle cx="1028.2" cy="1314.3" r="2.1" fill="#6b7c2c"/><circle cx="1044.7" cy="1314.3" r="2.1" fill="#6b7c2c"/><circle cx="1061.2" cy="1335.5" r="2.1" fill="#6b7c2c"/><circle cx="1077.7" cy="1293.1" r="2.1" fill="#6b7c2c"/><circle cx="1094.3" cy="1335.5" r="2.1" fill="#6b7c2c"/><circle cx="1110.8" cy="1293.1" r="2.1" fill="#6b7c2c"/><circle cx="1127.3" cy="1335.5" r="2.1" fill="#6b7c2c"/><circle cx="1143.8" cy="1314.3" r="2.1" fill="#6b7c2c"/><circle cx="1160.4" cy="1314.3" r="2.1" fill="#6b7c2c"/><circle cx="1176.9" cy="1314.3" r="2.1" fill="#6b7c2c"/><circle cx="1193.4" cy="1314.3" r="2.1" fill="#6b7c2c"/><circle cx="1209.9" cy="1335.5" r="2.1" fill="#6b7c2c"/><circle cx="1226.5" cy="1314.3" r="2.1" fill="#6b7c2c"/><circle cx="1243.0" cy="1335.5" r="2.1" fill="#6b7c2c"/><circle cx="1259.5" cy="1314.3" r="2.1" fill="#6b7c2c"/><circle cx="1276.0" cy="1314.3" r="2.1" fill="#6b7c2c"/><circle cx="1292.6" cy="1314.3" r="2.1" fill="#6b7c2c"/><circle cx="1309.1" cy="1314.3" r="2.1" fill="#6b7c2c"/><circle cx="1325.6" cy="1060.1" r="2.1" fill="#6b7c2c"/><circle cx="1342.2" cy="1186.2" r="2.1" fill="#6b7c2c"/><circle cx="1358.7" cy="1251.8" r="2.1" fill="#6b7c2c"/><circle cx="1375.2" cy="1273.0" r="2.1" fill="#6b7c2c"/><circle cx="1391.7" cy="1273.0" r="2.1" fill="#6b7c2c"/><circle cx="1408.3" cy="1251.8" r="2.1" fill="#6b7c2c"/><circle cx="1424.8" cy="1250.8" r="2.1" fill="#6b7c2c"/><circle cx="1441.3" cy="1293.1" r="2.1" fill="#6b7c2c"/><circle cx="1457.8" cy="1211.6" r="2.1" fill="#6b7c2c"/><circle cx="1474.4" cy="1272.0" r="2.1" fill="#6b7c2c"/><circle cx="1490.9" cy="1293.1" r="2.1" fill="#6b7c2c"/><circle cx="1507.4" cy="1250.8" r="2.1" fill="#6b7c2c"/><circle cx="1523.9" cy="1293.1" r="2.1" fill="#6b7c2c"/><circle cx="1540.5" cy="1144.8" r="2.1" fill="#6b7c2c"/><circle cx="1557.0" cy="981.7" r="2.1" fill="#6b7c2c"/><circle cx="1573.5" cy="1060.1" r="2.1" fill="#6b7c2c"/><circle cx="1590.0" cy="1044.2" r="2.1" fill="#6b7c2c"/><circle cx="1606.6" cy="924.5" r="2.1" fill="#6b7c2c"/><circle cx="1623.1" cy="1085.5" r="2.1" fill="#6b7c2c"/><circle cx="1639.6" cy="1251.8" r="2.1" fill="#6b7c2c"/><circle cx="1656.1" cy="1272.0" r="2.1" fill="#6b7c2c"/><circle cx="1672.7" cy="1272.0" r="2.1" fill="#6b7c2c"/><circle cx="1689.2" cy="1251.8" r="2.1" fill="#6b7c2c"/><circle cx="1705.7" cy="1248.6" r="2.1" fill="#6b7c2c"/><circle cx="1722.2" cy="961.6" r="2.1" fill="#6b7c2c"/><circle cx="1738.8" cy="1080.2" r="2.1" fill="#6b7c2c"/><circle cx="1755.3" cy="1314.3" r="2.1" fill="#6b7c2c"/><circle cx="1771.8" cy="1274.1" r="2.1" fill="#6b7c2c"/><circle cx="1788.4" cy="1335.5" r="2.1" fill="#6b7c2c"/><circle cx="1804.9" cy="1314.3" r="2.1" fill="#6b7c2c"/><circle cx="1821.4" cy="1335.5" r="2.1" fill="#6b7c2c"/><circle cx="1837.9" cy="1293.1" r="2.1" fill="#6b7c2c"/><circle cx="1854.5" cy="1270.9" r="2.1" fill="#6b7c2c"/><circle cx="1871.0" cy="1009.3" r="2.1" fill="#6b7c2c"/><circle cx="1887.5" cy="1060.1" r="2.1" fill="#6b7c2c"/><circle cx="1904.0" cy="1250.8" r="2.1" fill="#6b7c2c"/><polyline points="929.0,1314.3 945.5,1314.3 962.1,1272.0 978.6,1314.3 995.1,1314.3 1011.6,1293.1 1028.2,1314.3 1044.7,1293.1 1061.2,1293.1 1077.7,1293.1 1094.3,1314.3 1110.8,1272.0 1127.3,1293.1 1143.8,1314.3 1160.4,1314.3 1176.9,1314.3 1193.4,1314.3 1209.9,1314.3 1226.5,1314.3 1243.0,1293.1 1259.5,1314.3 1276.0,1293.1 1292.6,1314.3 1309.1,1293.1 1325.6,1187.2 1342.2,1189.3 1358.7,1251.8 1375.2,1293.1 1391.7,1251.8 1408.3,1293.1 1424.8,1250.8 1441.3,1251.8 1457.8,1229.6 1474.4,1250.8 1490.9,1293.1 1507.4,1251.8 1523.9,1272.0 1540.5,1227.5 1557.0,1085.5 1573.5,1148.0 1590.0,1184.0 1606.6,1085.5 1623.1,1210.5 1639.6,1272.0 1656.1,1272.0 1672.7,1293.1 1689.2,1231.7 1705.7,1273.0 1722.2,1187.2 1738.8,1166.0 1755.3,1293.1 1771.8,1293.1 1788.4,1314.3 1804.9,1274.1 1821.4,1273.0 1837.9,1335.5 1854.5,1250.8 1871.0,1127.9 1887.5,1081.3 1904.0,1293.1" fill="none" stroke="#6cc6f2" stroke-width="1.8" stroke-linejoin="round"/><circle cx="929.0" cy="1314.3" r="2.1" fill="#3a88bf"/><circle cx="945.5" cy="1314.3" r="2.1" fill="#3a88bf"/><circle cx="962.1" cy="1272.0" r="2.1" fill="#3a88bf"/><circle cx="978.6" cy="1314.3" r="2.1" fill="#3a88bf"/><circle cx="995.1" cy="1314.3" r="2.1" fill="#3a88bf"/><circle cx="1011.6" cy="1293.1" r="2.1" fill="#3a88bf"/><circle cx="1028.2" cy="1314.3" r="2.1" fill="#3a88bf"/><circle cx="1044.7" cy="1293.1" r="2.1" fill="#3a88bf"/><circle cx="1061.2" cy="1293.1" r="2.1" fill="#3a88bf"/><circle cx="1077.7" cy="1293.1" r="2.1" fill="#3a88bf"/><circle cx="1094.3" cy="1314.3" r="2.1" fill="#3a88bf"/><circle cx="1110.8" cy="1272.0" r="2.1" fill="#3a88bf"/><circle cx="1127.3" cy="1293.1" r="2.1" fill="#3a88bf"/><circle cx="1143.8" cy="1314.3" r="2.1" fill="#3a88bf"/><circle cx="1160.4" cy="1314.3" r="2.1" fill="#3a88bf"/><circle cx="1176.9" cy="1314.3" r="2.1" fill="#3a88bf"/><circle cx="1193.4" cy="1314.3" r="2.1" fill="#3a88bf"/><circle cx="1209.9" cy="1314.3" r="2.1" fill="#3a88bf"/><circle cx="1226.5" cy="1314.3" r="2.1" fill="#3a88bf"/><circle cx="1243.0" cy="1293.1" r="2.1" fill="#3a88bf"/><circle cx="1259.5" cy="1314.3" r="2.1" fill="#3a88bf"/><circle cx="1276.0" cy="1293.1" r="2.1" fill="#3a88bf"/><circle cx="1292.6" cy="1314.3" r="2.1" fill="#3a88bf"/><circle cx="1309.1" cy="1293.1" r="2.1" fill="#3a88bf"/><circle cx="1325.6" cy="1187.2" r="2.1" fill="#3a88bf"/><circle cx="1342.2" cy="1189.3" r="2.1" fill="#3a88bf"/><circle cx="1358.7" cy="1251.8" r="2.1" fill="#3a88bf"/><circle cx="1375.2" cy="1293.1" r="2.1" fill="#3a88bf"/><circle cx="1391.7" cy="1251.8" r="2.1" fill="#3a88bf"/><circle cx="1408.3" cy="1293.1" r="2.1" fill="#3a88bf"/><circle cx="1424.8" cy="1250.8" r="2.1" fill="#3a88bf"/><circle cx="1441.3" cy="1251.8" r="2.1" fill="#3a88bf"/><circle cx="1457.8" cy="1229.6" r="2.1" fill="#3a88bf"/><circle cx="1474.4" cy="1250.8" r="2.1" fill="#3a88bf"/><circle cx="1490.9" cy="1293.1" r="2.1" fill="#3a88bf"/><circle cx="1507.4" cy="1251.8" r="2.1" fill="#3a88bf"/><circle cx="1523.9" cy="1272.0" r="2.1" fill="#3a88bf"/><circle cx="1540.5" cy="1227.5" r="2.1" fill="#3a88bf"/><circle cx="1557.0" cy="1085.5" r="2.1" fill="#3a88bf"/><circle cx="1573.5" cy="1148.0" r="2.1" fill="#3a88bf"/><circle cx="1590.0" cy="1184.0" r="2.1" fill="#3a88bf"/><circle cx="1606.6" cy="1085.5" r="2.1" fill="#3a88bf"/><circle cx="1623.1" cy="1210.5" r="2.1" fill="#3a88bf"/><circle cx="1639.6" cy="1272.0" r="2.1" fill="#3a88bf"/><circle cx="1656.1" cy="1272.0" r="2.1" fill="#3a88bf"/><circle cx="1672.7" cy="1293.1" r="2.1" fill="#3a88bf"/><circle cx="1689.2" cy="1231.7" r="2.1" fill="#3a88bf"/><circle cx="1705.7" cy="1273.0" r="2.1" fill="#3a88bf"/><circle cx="1722.2" cy="1187.2" r="2.1" fill="#3a88bf"/><circle cx="1738.8" cy="1166.0" r="2.1" fill="#3a88bf"/><circle cx="1755.3" cy="1293.1" r="2.1" fill="#3a88bf"/><circle cx="1771.8" cy="1293.1" r="2.1" fill="#3a88bf"/><circle cx="1788.4" cy="1314.3" r="2.1" fill="#3a88bf"/><circle cx="1804.9" cy="1274.1" r="2.1" fill="#3a88bf"/><circle cx="1821.4" cy="1273.0" r="2.1" fill="#3a88bf"/><circle cx="1837.9" cy="1335.5" r="2.1" fill="#3a88bf"/><circle cx="1854.5" cy="1250.8" r="2.1" fill="#3a88bf"/><circle cx="1871.0" cy="1127.9" r="2.1" fill="#3a88bf"/><circle cx="1887.5" cy="1081.3" r="2.1" fill="#3a88bf"/><circle cx="1904.0" cy="1293.1" r="2.1" fill="#3a88bf"/><polyline points="929.0,1272.0 945.5,1272.0 962.1,1213.7 978.6,1293.1 995.1,1229.6 1011.6,1208.4 1028.2,1250.8 1044.7,1314.3 1061.2,1272.0 1077.7,1229.6 1094.3,1272.0 1110.8,1208.4 1127.3,1250.8 1143.8,1250.8 1160.4,1229.6 1176.9,1229.6 1193.4,1229.6 1209.9,1229.6 1226.5,1229.6 1243.0,1272.0 1259.5,1232.8 1276.0,1252.9 1292.6,1233.8 1309.1,1227.5 1325.6,836.6 1342.2,981.7 1358.7,1060.1 1375.2,1227.5 1391.7,1149.1 1408.3,1190.4 1424.8,1017.8 1441.3,1208.4 1457.8,1044.2 1474.4,1102.5 1490.9,1172.4 1507.4,1010.3 1523.9,1210.5 1540.5,933.0 1557.0,795.3 1573.5,827.1 1590.0,858.9 1606.6,784.7 1623.1,996.6 1639.6,1131.1 1656.1,1184.0 1672.7,1126.8 1689.2,1102.5 1705.7,1111.0 1722.2,816.5 1738.8,975.4 1755.3,1251.8 1771.8,1229.6 1788.4,1210.5 1804.9,1208.4 1821.4,1270.9 1837.9,1251.8 1854.5,1017.8 1871.0,848.3 1887.5,763.5 1904.0,1060.1" fill="none" stroke="#f2e27e" stroke-width="1.8" stroke-linejoin="round"/><circle cx="929.0" cy="1272.0" r="2.1" fill="#ac9a30"/><circle cx="945.5" cy="1272.0" r="2.1" fill="#ac9a30"/><circle cx="962.1" cy="1213.7" r="2.1" fill="#ac9a30"/><circle cx="978.6" cy="1293.1" r="2.1" fill="#ac9a30"/><circle cx="995.1" cy="1229.6" r="2.1" fill="#ac9a30"/><circle cx="1011.6" cy="1208.4" r="2.1" fill="#ac9a30"/><circle cx="1028.2" cy="1250.8" r="2.1" fill="#ac9a30"/><circle cx="1044.7" cy="1314.3" r="2.1" fill="#ac9a30"/><circle cx="1061.2" cy="1272.0" r="2.1" fill="#ac9a30"/><circle cx="1077.7" cy="1229.6" r="2.1" fill="#ac9a30"/><circle cx="1094.3" cy="1272.0" r="2.1" fill="#ac9a30"/><circle cx="1110.8" cy="1208.4" r="2.1" fill="#ac9a30"/><circle cx="1127.3" cy="1250.8" r="2.1" fill="#ac9a30"/><circle cx="1143.8" cy="1250.8" r="2.1" fill="#ac9a30"/><circle cx="1160.4" cy="1229.6" r="2.1" fill="#ac9a30"/><circle cx="1176.9" cy="1229.6" r="2.1" fill="#ac9a30"/><circle cx="1193.4" cy="1229.6" r="2.1" fill="#ac9a30"/><circle cx="1209.9" cy="1229.6" r="2.1" fill="#ac9a30"/><circle cx="1226.5" cy="1229.6" r="2.1" fill="#ac9a30"/><circle cx="1243.0" cy="1272.0" r="2.1" fill="#ac9a30"/><circle cx="1259.5" cy="1232.8" r="2.1" fill="#ac9a30"/><circle cx="1276.0" cy="1252.9" r="2.1" fill="#ac9a30"/><circle cx="1292.6" cy="1233.8" r="2.1" fill="#ac9a30"/><circle cx="1309.1" cy="1227.5" r="2.1" fill="#ac9a30"/><circle cx="1325.6" cy="836.6" r="2.1" fill="#ac9a30"/><circle cx="1342.2" cy="981.7" r="2.1" fill="#ac9a30"/><circle cx="1358.7" cy="1060.1" r="2.1" fill="#ac9a30"/><circle cx="1375.2" cy="1227.5" r="2.1" fill="#ac9a30"/><circle cx="1391.7" cy="1149.1" r="2.1" fill="#ac9a30"/><circle cx="1408.3" cy="1190.4" r="2.1" fill="#ac9a30"/><circle cx="1424.8" cy="1017.8" r="2.1" fill="#ac9a30"/><circle cx="1441.3" cy="1208.4" r="2.1" fill="#ac9a30"/><circle cx="1457.8" cy="1044.2" r="2.1" fill="#ac9a30"/><circle cx="1474.4" cy="1102.5" r="2.1" fill="#ac9a30"/><circle cx="1490.9" cy="1172.4" r="2.1" fill="#ac9a30"/><circle cx="1507.4" cy="1010.3" r="2.1" fill="#ac9a30"/><circle cx="1523.9" cy="1210.5" r="2.1" fill="#ac9a30"/><circle cx="1540.5" cy="933.0" r="2.1" fill="#ac9a30"/><circle cx="1557.0" cy="795.3" r="2.1" fill="#ac9a30"/><circle cx="1573.5" cy="827.1" r="2.1" fill="#ac9a30"/><circle cx="1590.0" cy="858.9" r="2.1" fill="#ac9a30"/><circle cx="1606.6" cy="784.7" r="2.1" fill="#ac9a30"/><circle cx="1623.1" cy="996.6" r="2.1" fill="#ac9a30"/><circle cx="1639.6" cy="1131.1" r="2.1" fill="#ac9a30"/><circle cx="1656.1" cy="1184.0" r="2.1" fill="#ac9a30"/><circle cx="1672.7" cy="1126.8" r="2.1" fill="#ac9a30"/><circle cx="1689.2" cy="1102.5" r="2.1" fill="#ac9a30"/><circle cx="1705.7" cy="1111.0" r="2.1" fill="#ac9a30"/><circle cx="1722.2" cy="816.5" r="2.1" fill="#ac9a30"/><circle cx="1738.8" cy="975.4" r="2.1" fill="#ac9a30"/><circle cx="1755.3" cy="1251.8" r="2.1" fill="#ac9a30"/><circle cx="1771.8" cy="1229.6" r="2.1" fill="#ac9a30"/><circle cx="1788.4" cy="1210.5" r="2.1" fill="#ac9a30"/><circle cx="1804.9" cy="1208.4" r="2.1" fill="#ac9a30"/><circle cx="1821.4" cy="1270.9" r="2.1" fill="#ac9a30"/><circle cx="1837.9" cy="1251.8" r="2.1" fill="#ac9a30"/><circle cx="1854.5" cy="1017.8" r="2.1" fill="#ac9a30"/><circle cx="1871.0" cy="848.3" r="2.1" fill="#ac9a30"/><circle cx="1887.5" cy="763.5" r="2.1" fill="#ac9a30"/><circle cx="1904.0" cy="1060.1" r="2.1" fill="#ac9a30"/><polyline points="929.0,1250.8 945.5,1293.1 962.1,1272.0 978.6,1272.0 995.1,1272.0 1011.6,1293.1 1028.2,1314.3 1044.7,1232.8 1061.2,1272.0 1077.7,1314.3 1094.3,1293.1 1110.8,1293.1 1127.3,1250.8 1143.8,1272.0 1160.4,1272.0 1176.9,1314.3 1193.4,1272.0 1209.9,1293.1 1226.5,1293.1 1243.0,1293.1 1259.5,1292.1 1276.0,1274.1 1292.6,1272.0 1309.1,1313.3 1325.6,1029.4 1342.2,1119.4 1358.7,1231.7 1375.2,1250.8 1391.7,1250.8 1408.3,1231.7 1424.8,1148.0 1441.3,1231.7 1457.8,1208.4 1474.4,1187.2 1490.9,1253.9 1507.4,1166.0 1523.9,1270.9 1540.5,1085.5 1557.0,1002.9 1573.5,1023.0 1590.0,1032.6 1606.6,975.4 1623.1,1106.7 1639.6,1250.8 1656.1,1229.6 1672.7,1210.5 1689.2,1187.2 1705.7,1210.5 1722.2,1060.1 1738.8,1060.1 1755.3,1251.8 1771.8,1293.1 1788.4,1293.1 1804.9,1293.1 1821.4,1253.9 1837.9,1292.1 1854.5,1169.2 1871.0,1017.8 1887.5,933.0 1904.0,1229.6" fill="none" stroke="#5b40d6" stroke-width="1.8" stroke-linejoin="round"/><circle cx="929.0" cy="1250.8" r="2.1" fill="#1e1185"/><circle cx="945.5" cy="1293.1" r="2.1" fill="#1e1185"/><circle cx="962.1" cy="1272.0" r="2.1" fill="#1e1185"/><circle cx="978.6" cy="1272.0" r="2.1" fill="#1e1185"/><circle cx="995.1" cy="1272.0" r="2.1" fill="#1e1185"/><circle cx="1011.6" cy="1293.1" r="2.1" fill="#1e1185"/><circle cx="1028.2" cy="1314.3" r="2.1" fill="#1e1185"/><circle cx="1044.7" cy="1232.8" r="2.1" fill="#1e1185"/><circle cx="1061.2" cy="1272.0" r="2.1" fill="#1e1185"/><circle cx="1077.7" cy="1314.3" r="2.1" fill="#1e1185"/><circle cx="1094.3" cy="1293.1" r="2.1" fill="#1e1185"/><circle cx="1110.8" cy="1293.1" r="2.1" fill="#1e1185"/><circle cx="1127.3" cy="1250.8" r="2.1" fill="#1e1185"/><circle cx="1143.8" cy="1272.0" r="2.1" fill="#1e1185"/><circle cx="1160.4" cy="1272.0" r="2.1" fill="#1e1185"/><circle cx="1176.9" cy="1314.3" r="2.1" fill="#1e1185"/><circle cx="1193.4" cy="1272.0" r="2.1" fill="#1e1185"/><circle cx="1209.9" cy="1293.1" r="2.1" fill="#1e1185"/><circle cx="1226.5" cy="1293.1" r="2.1" fill="#1e1185"/><circle cx="1243.0" cy="1293.1" r="2.1" fill="#1e1185"/><circle cx="1259.5" cy="1292.1" r="2.1" fill="#1e1185"/><circle cx="1276.0" cy="1274.1" r="2.1" fill="#1e1185"/><circle cx="1292.6" cy="1272.0" r="2.1" fill="#1e1185"/><circle cx="1309.1" cy="1313.3" r="2.1" fill="#1e1185"/><circle cx="1325.6" cy="1029.4" r="2.1" fill="#1e1185"/><circle cx="1342.2" cy="1119.4" r="2.1" fill="#1e1185"/><circle cx="1358.7" cy="1231.7" r="2.1" fill="#1e1185"/><circle cx="1375.2" cy="1250.8" r="2.1" fill="#1e1185"/><circle cx="1391.7" cy="1250.8" r="2.1" fill="#1e1185"/><circle cx="1408.3" cy="1231.7" r="2.1" fill="#1e1185"/><circle cx="1424.8" cy="1148.0" r="2.1" fill="#1e1185"/><circle cx="1441.3" cy="1231.7" r="2.1" fill="#1e1185"/><circle cx="1457.8" cy="1208.4" r="2.1" fill="#1e1185"/><circle cx="1474.4" cy="1187.2" r="2.1" fill="#1e1185"/><circle cx="1490.9" cy="1253.9" r="2.1" fill="#1e1185"/><circle cx="1507.4" cy="1166.0" r="2.1" fill="#1e1185"/><circle cx="1523.9" cy="1270.9" r="2.1" fill="#1e1185"/><circle cx="1540.5" cy="1085.5" r="2.1" fill="#1e1185"/><circle cx="1557.0" cy="1002.9" r="2.1" fill="#1e1185"/><circle cx="1573.5" cy="1023.0" r="2.1" fill="#1e1185"/><circle cx="1590.0" cy="1032.6" r="2.1" fill="#1e1185"/><circle cx="1606.6" cy="975.4" r="2.1" fill="#1e1185"/><circle cx="1623.1" cy="1106.7" r="2.1" fill="#1e1185"/><circle cx="1639.6" cy="1250.8" r="2.1" fill="#1e1185"/><circle cx="1656.1" cy="1229.6" r="2.1" fill="#1e1185"/><circle cx="1672.7" cy="1210.5" r="2.1" fill="#1e1185"/><circle cx="1689.2" cy="1187.2" r="2.1" fill="#1e1185"/><circle cx="1705.7" cy="1210.5" r="2.1" fill="#1e1185"/><circle cx="1722.2" cy="1060.1" r="2.1" fill="#1e1185"/><circle cx="1738.8" cy="1060.1" r="2.1" fill="#1e1185"/><circle cx="1755.3" cy="1251.8" r="2.1" fill="#1e1185"/><circle cx="1771.8" cy="1293.1" r="2.1" fill="#1e1185"/><circle cx="1788.4" cy="1293.1" r="2.1" fill="#1e1185"/><circle cx="1804.9" cy="1293.1" r="2.1" fill="#1e1185"/><circle cx="1821.4" cy="1253.9" r="2.1" fill="#1e1185"/><circle cx="1837.9" cy="1292.1" r="2.1" fill="#1e1185"/><circle cx="1854.5" cy="1169.2" r="2.1" fill="#1e1185"/><circle cx="1871.0" cy="1017.8" r="2.1" fill="#1e1185"/><circle cx="1887.5" cy="933.0" r="2.1" fill="#1e1185"/><circle cx="1904.0" cy="1229.6" r="2.1" fill="#1e1185"/><polyline points="929.0,1208.4 945.5,1250.8 962.1,1231.7 978.6,1208.4 995.1,1253.9 1011.6,1206.3 1028.2,1250.8 1044.7,1231.7 1061.2,1250.8 1077.7,1231.7 1094.3,1229.6 1110.8,1229.6 1127.3,1272.0 1143.8,1272.0 1160.4,1272.0 1176.9,1250.8 1193.4,1229.6 1209.9,1250.8 1226.5,1250.8 1243.0,1294.2 1259.5,1250.8 1276.0,1060.1 1292.6,1065.4 1309.1,1166.0 1325.6,751.9 1342.2,954.2 1358.7,981.7 1375.2,1060.1 1391.7,932.0 1408.3,1029.4 1424.8,933.0 1441.3,890.7 1457.8,1023.0 1474.4,1010.3 1490.9,1044.2 1507.4,919.2 1523.9,1038.9 1540.5,869.5 1557.0,879.0 1573.5,911.8 1590.0,869.5 1606.6,1023.0 1623.1,940.4 1639.6,1038.9 1656.1,954.2 1672.7,869.5 1689.2,961.6 1705.7,1023.0 1722.2,1017.8 1738.8,890.7 1755.3,1102.5 1771.8,1144.8 1788.4,1187.2 1804.9,1148.0 1821.4,1187.2 1837.9,1229.6 1854.5,1085.5 1871.0,784.7 1887.5,742.4 1904.0,1023.0" fill="none" stroke="#e3693d" stroke-width="1.8" stroke-linejoin="round"/><circle cx="929.0" cy="1208.4" r="2.1" fill="#9e3b1c"/><circle cx="945.5" cy="1250.8" r="2.1" fill="#9e3b1c"/><circle cx="962.1" cy="1231.7" r="2.1" fill="#9e3b1c"/><circle cx="978.6" cy="1208.4" r="2.1" fill="#9e3b1c"/><circle cx="995.1" cy="1253.9" r="2.1" fill="#9e3b1c"/><circle cx="1011.6" cy="1206.3" r="2.1" fill="#9e3b1c"/><circle cx="1028.2" cy="1250.8" r="2.1" fill="#9e3b1c"/><circle cx="1044.7" cy="1231.7" r="2.1" fill="#9e3b1c"/><circle cx="1061.2" cy="1250.8" r="2.1" fill="#9e3b1c"/><circle cx="1077.7" cy="1231.7" r="2.1" fill="#9e3b1c"/><circle cx="1094.3" cy="1229.6" r="2.1" fill="#9e3b1c"/><circle cx="1110.8" cy="1229.6" r="2.1" fill="#9e3b1c"/><circle cx="1127.3" cy="1272.0" r="2.1" fill="#9e3b1c"/><circle cx="1143.8" cy="1272.0" r="2.1" fill="#9e3b1c"/><circle cx="1160.4" cy="1272.0" r="2.1" fill="#9e3b1c"/><circle cx="1176.9" cy="1250.8" r="2.1" fill="#9e3b1c"/><circle cx="1193.4" cy="1229.6" r="2.1" fill="#9e3b1c"/><circle cx="1209.9" cy="1250.8" r="2.1" fill="#9e3b1c"/><circle cx="1226.5" cy="1250.8" r="2.1" fill="#9e3b1c"/><circle cx="1243.0" cy="1294.2" r="2.1" fill="#9e3b1c"/><circle cx="1259.5" cy="1250.8" r="2.1" fill="#9e3b1c"/><circle cx="1276.0" cy="1060.1" r="2.1" fill="#9e3b1c"/><circle cx="1292.6" cy="1065.4" r="2.1" fill="#9e3b1c"/><circle cx="1309.1" cy="1166.0" r="2.1" fill="#9e3b1c"/><circle cx="1325.6" cy="751.9" r="2.1" fill="#9e3b1c"/><circle cx="1342.2" cy="954.2" r="2.1" fill="#9e3b1c"/><circle cx="1358.7" cy="981.7" r="2.1" fill="#9e3b1c"/><circle cx="1375.2" cy="1060.1" r="2.1" fill="#9e3b1c"/><circle cx="1391.7" cy="932.0" r="2.1" fill="#9e3b1c"/><circle cx="1408.3" cy="1029.4" r="2.1" fill="#9e3b1c"/><circle cx="1424.8" cy="933.0" r="2.1" fill="#9e3b1c"/><circle cx="1441.3" cy="890.7" r="2.1" fill="#9e3b1c"/><circle cx="1457.8" cy="1023.0" r="2.1" fill="#9e3b1c"/><circle cx="1474.4" cy="1010.3" r="2.1" fill="#9e3b1c"/><circle cx="1490.9" cy="1044.2" r="2.1" fill="#9e3b1c"/><circle cx="1507.4" cy="919.2" r="2.1" fill="#9e3b1c"/><circle cx="1523.9" cy="1038.9" r="2.1" fill="#9e3b1c"/><circle cx="1540.5" cy="869.5" r="2.1" fill="#9e3b1c"/><circle cx="1557.0" cy="879.0" r="2.1" fill="#9e3b1c"/><circle cx="1573.5" cy="911.8" r="2.1" fill="#9e3b1c"/><circle cx="1590.0" cy="869.5" r="2.1" fill="#9e3b1c"/><circle cx="1606.6" cy="1023.0" r="2.1" fill="#9e3b1c"/><circle cx="1623.1" cy="940.4" r="2.1" fill="#9e3b1c"/><circle cx="1639.6" cy="1038.9" r="2.1" fill="#9e3b1c"/><circle cx="1656.1" cy="954.2" r="2.1" fill="#9e3b1c"/><circle cx="1672.7" cy="869.5" r="2.1" fill="#9e3b1c"/><circle cx="1689.2" cy="961.6" r="2.1" fill="#9e3b1c"/><circle cx="1705.7" cy="1023.0" r="2.1" fill="#9e3b1c"/><circle cx="1722.2" cy="1017.8" r="2.1" fill="#9e3b1c"/><circle cx="1738.8" cy="890.7" r="2.1" fill="#9e3b1c"/><circle cx="1755.3" cy="1102.5" r="2.1" fill="#9e3b1c"/><circle cx="1771.8" cy="1144.8" r="2.1" fill="#9e3b1c"/><circle cx="1788.4" cy="1187.2" r="2.1" fill="#9e3b1c"/><circle cx="1804.9" cy="1148.0" r="2.1" fill="#9e3b1c"/><circle cx="1821.4" cy="1187.2" r="2.1" fill="#9e3b1c"/><circle cx="1837.9" cy="1229.6" r="2.1" fill="#9e3b1c"/><circle cx="1854.5" cy="1085.5" r="2.1" fill="#9e3b1c"/><circle cx="1871.0" cy="784.7" r="2.1" fill="#9e3b1c"/><circle cx="1887.5" cy="742.4" r="2.1" fill="#9e3b1c"/><circle cx="1904.0" cy="1023.0" r="2.1" fill="#9e3b1c"/><polyline points="929.0,1190.4 945.5,1250.8 962.1,1250.8 978.6,1252.9 995.1,1250.8 1011.6,1250.8 1028.2,1208.4 1044.7,1229.6 1061.2,1250.8 1077.7,1210.5 1094.3,1229.6 1110.8,1229.6 1127.3,1250.8 1143.8,1272.0 1160.4,1250.8 1176.9,1229.6 1193.4,1250.8 1209.9,1232.8 1226.5,1250.8 1243.0,1270.9 1259.5,1230.6 1276.0,1044.2 1292.6,1074.9 1309.1,1131.1 1325.6,751.9 1342.2,919.2 1358.7,975.4 1375.2,1009.3 1391.7,890.7 1408.3,1017.8 1424.8,940.4 1441.3,890.7 1457.8,996.6 1474.4,975.4 1490.9,1024.1 1507.4,919.2 1523.9,1060.1 1540.5,848.3 1557.0,879.0 1573.5,890.7 1590.0,857.8 1606.6,1053.8 1623.1,919.2 1639.6,1017.8 1656.1,899.1 1672.7,890.7 1689.2,890.7 1705.7,1023.0 1722.2,1038.9 1738.8,899.1 1755.3,1065.4 1771.8,1140.6 1788.4,1127.9 1804.9,1166.0 1821.4,1205.2 1837.9,1210.5 1854.5,1065.4 1871.0,827.1 1887.5,742.4 1904.0,981.7" fill="none" stroke="#5f95d8" stroke-width="1.8" stroke-linejoin="round"/><circle cx="929.0" cy="1190.4" r="2.1" fill="#23436e"/><circle cx="945.5" cy="1250.8" r="2.1" fill="#23436e"/><circle cx="962.1" cy="1250.8" r="2.1" fill="#23436e"/><circle cx="978.6" cy="1252.9" r="2.1" fill="#23436e"/><circle cx="995.1" cy="1250.8" r="2.1" fill="#23436e"/><circle cx="1011.6" cy="1250.8" r="2.1" fill="#23436e"/><circle cx="1028.2" cy="1208.4" r="2.1" fill="#23436e"/><circle cx="1044.7" cy="1229.6" r="2.1" fill="#23436e"/><circle cx="1061.2" cy="1250.8" r="2.1" fill="#23436e"/><circle cx="1077.7" cy="1210.5" r="2.1" fill="#23436e"/><circle cx="1094.3" cy="1229.6" r="2.1" fill="#23436e"/><circle cx="1110.8" cy="1229.6" r="2.1" fill="#23436e"/><circle cx="1127.3" cy="1250.8" r="2.1" fill="#23436e"/><circle cx="1143.8" cy="1272.0" r="2.1" fill="#23436e"/><circle cx="1160.4" cy="1250.8" r="2.1" fill="#23436e"/><circle cx="1176.9" cy="1229.6" r="2.1" fill="#23436e"/><circle cx="1193.4" cy="1250.8" r="2.1" fill="#23436e"/><circle cx="1209.9" cy="1232.8" r="2.1" fill="#23436e"/><circle cx="1226.5" cy="1250.8" r="2.1" fill="#23436e"/><circle cx="1243.0" cy="1270.9" r="2.1" fill="#23436e"/><circle cx="1259.5" cy="1230.6" r="2.1" fill="#23436e"/><circle cx="1276.0" cy="1044.2" r="2.1" fill="#23436e"/><circle cx="1292.6" cy="1074.9" r="2.1" fill="#23436e"/><circle cx="1309.1" cy="1131.1" r="2.1" fill="#23436e"/><circle cx="1325.6" cy="751.9" r="2.1" fill="#23436e"/><circle cx="1342.2" cy="919.2" r="2.1" fill="#23436e"/><circle cx="1358.7" cy="975.4" r="2.1" fill="#23436e"/><circle cx="1375.2" cy="1009.3" r="2.1" fill="#23436e"/><circle cx="1391.7" cy="890.7" r="2.1" fill="#23436e"/><circle cx="1408.3" cy="1017.8" r="2.1" fill="#23436e"/><circle cx="1424.8" cy="940.4" r="2.1" fill="#23436e"/><circle cx="1441.3" cy="890.7" r="2.1" fill="#23436e"/><circle cx="1457.8" cy="996.6" r="2.1" fill="#23436e"/><circle cx="1474.4" cy="975.4" r="2.1" fill="#23436e"/><circle cx="1490.9" cy="1024.1" r="2.1" fill="#23436e"/><circle cx="1507.4" cy="919.2" r="2.1" fill="#23436e"/><circle cx="1523.9" cy="1060.1" r="2.1" fill="#23436e"/><circle cx="1540.5" cy="848.3" r="2.1" fill="#23436e"/><circle cx="1557.0" cy="879.0" r="2.1" fill="#23436e"/><circle cx="1573.5" cy="890.7" r="2.1" fill="#23436e"/><circle cx="1590.0" cy="857.8" r="2.1" fill="#23436e"/><circle cx="1606.6" cy="1053.8" r="2.1" fill="#23436e"/><circle cx="1623.1" cy="919.2" r="2.1" fill="#23436e"/><circle cx="1639.6" cy="1017.8" r="2.1" fill="#23436e"/><circle cx="1656.1" cy="899.1" r="2.1" fill="#23436e"/><circle cx="1672.7" cy="890.7" r="2.1" fill="#23436e"/><circle cx="1689.2" cy="890.7" r="2.1" fill="#23436e"/><circle cx="1705.7" cy="1023.0" r="2.1" fill="#23436e"/><circle cx="1722.2" cy="1038.9" r="2.1" fill="#23436e"/><circle cx="1738.8" cy="899.1" r="2.1" fill="#23436e"/><circle cx="1755.3" cy="1065.4" r="2.1" fill="#23436e"/><circle cx="1771.8" cy="1140.6" r="2.1" fill="#23436e"/><circle cx="1788.4" cy="1127.9" r="2.1" fill="#23436e"/><circle cx="1804.9" cy="1166.0" r="2.1" fill="#23436e"/><circle cx="1821.4" cy="1205.2" r="2.1" fill="#23436e"/><circle cx="1837.9" cy="1210.5" r="2.1" fill="#23436e"/><circle cx="1854.5" cy="1065.4" r="2.1" fill="#23436e"/><circle cx="1871.0" cy="827.1" r="2.1" fill="#23436e"/><circle cx="1887.5" cy="742.4" r="2.1" fill="#23436e"/><circle cx="1904.0" cy="981.7" r="2.1" fill="#23436e"/></g></svg>
</div></div></body></html>
